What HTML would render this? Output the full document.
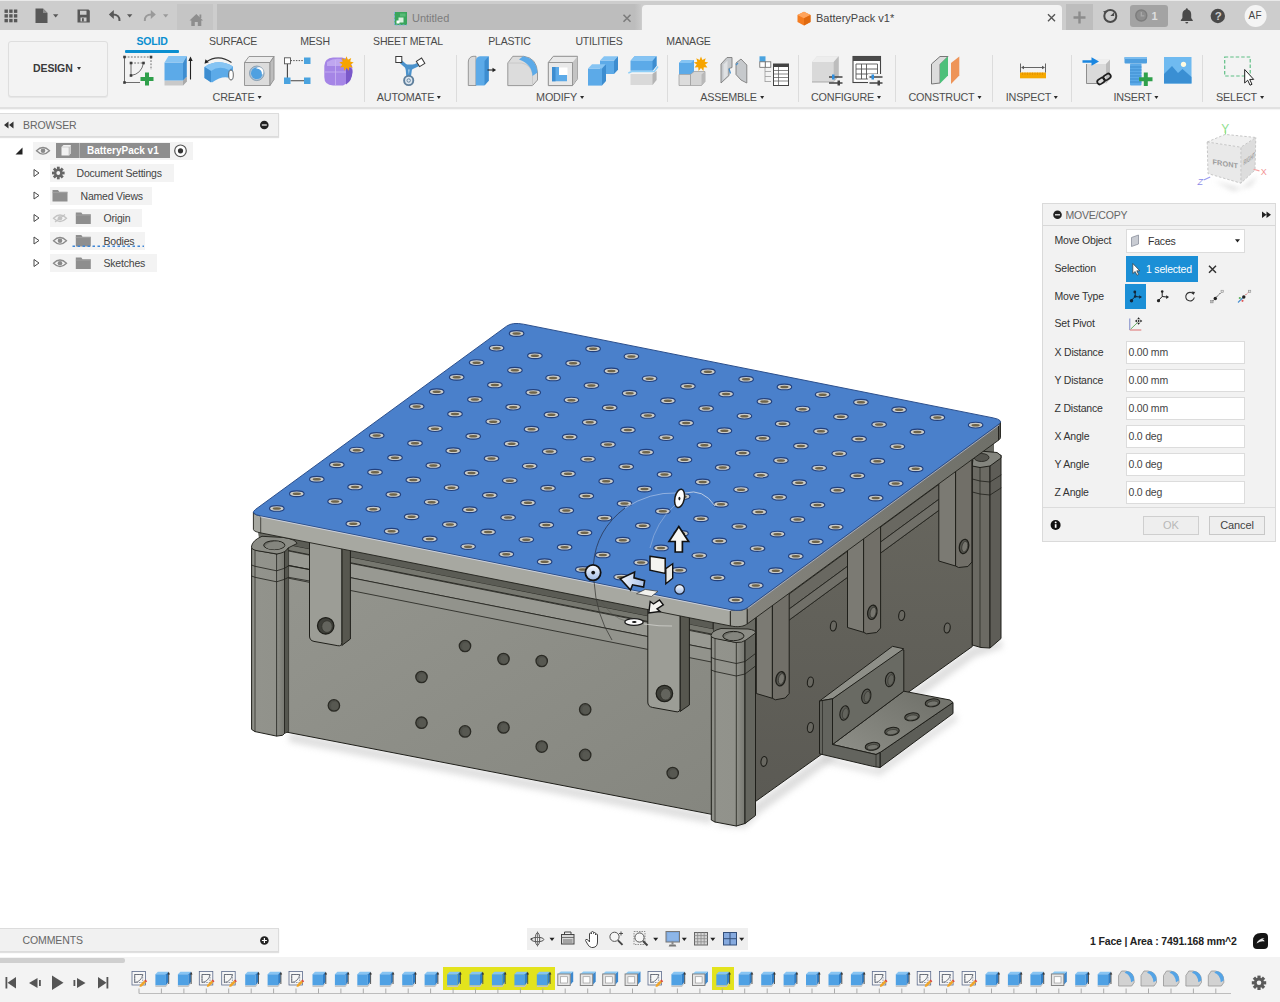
<!DOCTYPE html>
<html>
<head>
<meta charset="utf-8">
<title>BatteryPack v1</title>
<style>
*{box-sizing:border-box;margin:0;padding:0}
html,body{width:1280px;height:1002px;overflow:hidden;background:#fff;font-family:"Liberation Sans",sans-serif;font-size:11px;color:#444}
.abs{position:absolute}
#topbar{position:absolute;left:0;top:0;width:1280px;height:31px;background:#cdcdcd;border-top:1.500px solid #e9e9e9}
#toolbar{position:absolute;left:0;top:30px;width:1280px;height:78.500px;background:#f3f3f3;border-bottom:2.500px solid #e1e1e1;box-shadow:0 1px 1px rgba(0,0,0,.04)}
.tab{position:absolute;top:4px;height:27px}
.t{position:absolute;white-space:nowrap;line-height:1}
.ttab{font-size:10.5px;color:#4a4a4a;top:36px;letter-spacing:-0.2px}
.tgrp{font-size:10.8px;color:#4e4e4e;top:92px;letter-spacing:-0.2px}
.sep{position:absolute;top:55px;width:1px;height:47px;background:#dcdcdc}
.arrow{display:inline-block;width:0;height:0;border-left:2.8px solid transparent;border-right:2.8px solid transparent;border-top:3.8px solid #2a2a2a;vertical-align:middle;margin-left:3px;position:relative;top:-1px}
#browserhdr{position:absolute;left:0;top:113px;width:279px;height:24px;background:#f1f1f1;border:1px solid #dcdcdc;border-left:none;box-shadow:0 1px 1px rgba(0,0,0,.12)}
#commentshdr{position:absolute;left:0;top:928px;width:279px;height:24px;background:#f1f1f1;border:1px solid #dcdcdc;border-left:none;box-shadow:0 1px 1px rgba(0,0,0,.12)}
#timeline{position:absolute;left:0;top:957px;width:1280px;height:45px;background:#f3f3f3}
.row{position:absolute;height:19px;background:#f3f3f3}
.rowt{position:absolute;font-size:10.5px;color:#444;white-space:nowrap;line-height:1;letter-spacing:-0.2px}
#dlg{position:absolute;left:1042px;top:203px;width:234px;height:339px;background:#f2f2f2;border:1px solid #dadada}
.lab{position:absolute;left:11px;font-size:10.5px;color:#333;white-space:nowrap;line-height:1;letter-spacing:-0.2px}
.inp{position:absolute;left:83px;width:119px;height:23px;background:#fff;border:1px solid #dcdcdc;font-size:10.5px;color:#444;line-height:21px;padding-left:2px;letter-spacing:-0.2px}
</style>
</head>
<body>
<!-- ======= TOP BAR ======= -->
<div id="topbar"></div>
<div class="tab" style="left:177px;width:36px;background:#c5c5c5"></div>
<div class="tab" style="left:217px;width:423.500px;background:linear-gradient(90deg,#bdbdbd 0,#bdbdbd 98.500%,#c9c9c9 100%)"></div>
<div class="tab" style="left:641.500px;width:420.500px;top:5px;height:26px;background:#f3f3f3;border-radius:4px 4px 0 0"></div>
<div class="tab" style="left:1066px;width:27px;background:#bdbdbd;height:26px"></div>
<div class="abs" style="left:1130px;top:4.500px;width:38px;height:22px;background:#a3a3a3;border-radius:3px"></div>
<!--TOPICONS-->
<svg class="abs" style="left:0;top:0" width="1280" height="31" viewBox="0 0 1280 31">
<g fill="#585858">
<rect x="4.500" y="9.500" width="3.400" height="3.400"/><rect x="9.200" y="9.500" width="3.400" height="3.400"/><rect x="13.900" y="9.500" width="3.400" height="3.400"/>
<rect x="4.500" y="14.200" width="3.400" height="3.400"/><rect x="9.200" y="14.200" width="3.400" height="3.400"/><rect x="13.900" y="14.200" width="3.400" height="3.400"/>
<rect x="4.500" y="18.900" width="3.400" height="3.400"/><rect x="9.200" y="18.900" width="3.400" height="3.400"/><rect x="13.900" y="18.900" width="3.400" height="3.400"/>
<path d="M35.500 8.500h7.500l4.500 4.500v10h-12z"/>
<path d="M53 14.200h5.400l-2.700 3.300z"/>
<path d="M77.500 9.500h11l1.300 1.300v11.700h-12.300zM80 10.800v4h6.500v-4zM80.500 17.500v4h6v-4z" fill-rule="evenodd"/><rect x="82" y="18.200" width="1.800" height="3.300" fill="#585858"/>
<path d="M127 14.200h5.400l-2.700 3.300z"/>
</g>
<path d="M43 8.500v4.500h4.500z" fill="#8d8d8d"/>
<path d="M119.500 21Q120 14.500 112.500 14.500h-1.500" fill="none" stroke="#585858" stroke-width="2"/><path d="M108.800 14.500l5-4.500v9z" fill="#585858"/>
<path d="M144.800 21Q144.300 14.500 151.800 14.500h1.500" fill="none" stroke="#9a9a9a" stroke-width="2"/><path d="M155.800 14.500l-5-4.500v9z" fill="#9a9a9a"/>
<path d="M163 14.200h5.400l-2.700 3.300z" fill="#9a9a9a"/>
<!-- home -->
<path d="M189.500 20.500l6.800-6.500 6.800 6.500h-1.800v5.500h-3.500v-4h-3v4h-3.500v-5.500z" fill="#8e8e8e"/><rect x="199.500" y="14.500" width="1.800" height="3.500" fill="#8e8e8e"/>
<!-- untitled icon -->
<rect x="394.500" y="12" width="12.500" height="13" fill="#3aa55c"/><path d="M394.500 12v13h12.500" fill="none" stroke="#7fb2e0" stroke-width="1" stroke-dasharray="2 1.500"/><rect x="398.500" y="17.500" width="5" height="5" fill="#d8f0de"/><rect x="396.500" y="20.500" width="3" height="3" fill="#fff"/><rect x="400" y="13.500" width="5.500" height="3" fill="#58bb77"/>
<!-- tab close (inactive) -->
<path d="M623.500 14.800l7 7M630.500 14.800l-7 7" stroke="#7c7c7c" stroke-width="1.600"/>
<!-- active tab icon -->
<path d="M804 11.800l6.500 3.200v7l-6.500 3.500-6.500-3.500v-7z" fill="#f47c20"/><path d="M804 11.800l6.500 3.200-6.500 3.300-6.500-3.300z" fill="#ffa45c"/><path d="M804 18.300l6.500-3.300v7l-6.500 3.500z" fill="#e06a10"/>
<path d="M1048 14.300l7 7M1055 14.300l-7 7" stroke="#555" stroke-width="1.400"/>
<!-- plus -->
<path d="M1079.500 11.500v12M1073.500 17.500h12" stroke="#8c8c8c" stroke-width="2.400"/>
<!-- extension clock -->
<circle cx="1110.300" cy="16" r="6" fill="none" stroke="#4a4a4a" stroke-width="2"/><path d="M1110.300 16l3.800-3.800v3.800zM1105.500 13.500l-2.500-2 3.500-1z" fill="#4a4a4a"/>
<!-- job status -->
<circle cx="1141.300" cy="15.500" r="5.500" fill="#8d8d8d" stroke="#7d7d7d" stroke-width="1.400"/><path d="M1141.300 12v3.800h3" stroke="#a8a8a8" stroke-width="1.300" fill="none"/>
<!-- bell -->
<path d="M1186.800 8.300q1 0 1.100 1.100 3.300 1 3.300 5v3.600l1.600 2.200v.8h-12v-.8l1.600-2.200v-3.600q0-4 3.300-5 .1-1.100 1.100-1.100zM1185.300 22h3q-.2 1.500-1.500 1.500t-1.500-1.500z" fill="#4a4a4a"/>
<!-- help -->
<circle cx="1217.800" cy="16" r="7.200" fill="#4a4a4a"/>
<!-- avatar -->
<circle cx="1255.600" cy="16" r="11" fill="#f4f4f4"/>
</svg>
<div class="t" style="left:412px;top:13px;font-size:11px;color:#7c7c7c">Untitled</div>
<div class="t" style="left:816px;top:13px;font-size:11px;color:#444">BatteryPack v1*</div>
<div class="t" style="left:1151.500px;top:10.500px;font-size:11px;color:#dedede;font-weight:bold">1</div>
<div class="t" style="left:1214.800px;top:10.500px;font-size:11.500px;color:#cdcdcd;font-weight:bold">?</div>
<div class="t" style="left:1248.500px;top:11px;font-size:10px;color:#444;letter-spacing:.3px">AF</div>

<!--/TOPICONS-->
<!-- ======= TOOLBAR ======= -->
<div id="toolbar"></div>
<!--TOOLBAR-->
<div class="abs" style="left:8px;top:41px;width:100px;height:56px;border:1px solid #dedede;border-radius:3px;background:#f3f3f3;box-shadow:0 1px 1px rgba(0,0,0,.06)"></div>
<div class="t" style="left:33px;top:63px;font-size:10.5px;font-weight:bold;color:#3a3a3a;letter-spacing:-0.1px">DESIGN</div>
<div class="abs" style="left:77px;top:67px;width:0;height:0;border-left:2.5px solid transparent;border-right:2.5px solid transparent;border-top:3.5px solid #333"></div>
<div class="t ttab" style="left:152px;transform:translateX(-50%);color:#0a8fd0;font-weight:bold">SOLID</div>
<div class="abs" style="left:125px;top:50px;width:54px;height:2.5px;background:#0a8fd0;border-radius:1px"></div>
<div class="t ttab" style="left:233px;transform:translateX(-50%)">SURFACE</div>
<div class="t ttab" style="left:315px;transform:translateX(-50%)">MESH</div>
<div class="t ttab" style="left:408px;transform:translateX(-50%)">SHEET METAL</div>
<div class="t ttab" style="left:509.5px;transform:translateX(-50%)">PLASTIC</div>
<div class="t ttab" style="left:599px;transform:translateX(-50%)">UTILITIES</div>
<div class="t ttab" style="left:688.5px;transform:translateX(-50%)">MANAGE</div>
<div class="t tgrp" style="left:237px;transform:translateX(-50%)">CREATE<span class="arrow"></span></div>
<div class="t tgrp" style="left:409px;transform:translateX(-50%)">AUTOMATE<span class="arrow"></span></div>
<div class="t tgrp" style="left:560px;transform:translateX(-50%)">MODIFY<span class="arrow"></span></div>
<div class="t tgrp" style="left:732px;transform:translateX(-50%)">ASSEMBLE<span class="arrow"></span></div>
<div class="t tgrp" style="left:846px;transform:translateX(-50%)">CONFIGURE<span class="arrow"></span></div>
<div class="t tgrp" style="left:945px;transform:translateX(-50%)">CONSTRUCT<span class="arrow"></span></div>
<div class="t tgrp" style="left:1032px;transform:translateX(-50%)">INSPECT<span class="arrow"></span></div>
<div class="t tgrp" style="left:1136px;transform:translateX(-50%)">INSERT<span class="arrow"></span></div>
<div class="t tgrp" style="left:1240px;transform:translateX(-50%)">SELECT<span class="arrow"></span></div>
<div class="sep" style="left:364px"></div><div class="sep" style="left:456px"></div><div class="sep" style="left:667px"></div>
<div class="sep" style="left:798px"></div><div class="sep" style="left:895px"></div><div class="sep" style="left:992px"></div>
<div class="sep" style="left:1071px"></div><div class="sep" style="left:1202px"></div>
<svg class="abs" style="left:0;top:0" width="1280" height="106" viewBox="0 0 1280 106">
<!-- sketch -->
<g stroke="#555" stroke-width=".85" fill="none">
<path d="M124.500 57H151" stroke-dasharray="1.800 1.400"/><path d="M151 57V70" stroke-dasharray="1.800 1.400"/><path d="M124.500 57V82.500H140"/>
<path d="M131 63H143.500" stroke-dasharray="1.800 1.400"/><path d="M131 63V75.500Q141.500 74 143.500 63"/>
</g>
<g fill="#3a3a3a"><rect x="123.200" y="55.700" width="2.600" height="2.600"/><rect x="149.700" y="55.700" width="2.600" height="2.600"/><rect x="123.200" y="81.200" width="2.600" height="2.600"/><rect x="129.700" y="61.700" width="2.600" height="2.600"/><rect x="142.200" y="61.700" width="2.600" height="2.600"/><rect x="129.700" y="74.200" width="2.600" height="2.600"/></g>
<path d="M145 72.500h4v4.500h4.500v4h-4.500v4.500h-4v-4.500h-4.500v-4h4.500z" fill="#2fa04b"/>
<!-- extrude -->
<path d="M164.500 80.500h18.500l3.800-4v5l-3.800 4h-18.500z" fill="#c9c9c9"/><path d="M183 80.500l3.800-4v5l-3.800 4z" fill="#aaa"/>
<path d="M164.500 62.500h18.500v18h-18.500z" fill="#5caae8"/><path d="M164.500 62.500l4-6.500h18.300l-3.800 6.500z" fill="#86c4f3"/><path d="M183 62.500l3.800-6.500v20.500l-3.800 4z" fill="#3d8dd0"/>
<path d="M190.500 79.500V59" stroke="#222" stroke-width="1.100"/><path d="M188.300 61l2.200-4.500 2.200 4.500z" fill="#222"/>
<!-- revolve -->
<path d="M204.500 67Q218 58 233 66.500V79.500Q224 74 212 82.500L204.500 78z" fill="#5caae8"/>
<path d="M204.500 67Q218 58 233 66.500L229 70Q219 65 211 71z" fill="#86c4f3"/>
<path d="M211 71v11.500l-6.500-4.500V67z" fill="#3d8dd0"/>
<ellipse cx="231" cy="75" rx="2.300" ry="5" fill="#fff" stroke="#444" stroke-width=".8"/>
<path d="M206 62Q218.500 53.500 231.500 62.500" stroke="#333" stroke-width="1.100" fill="none"/><path d="M204.500 63.800l1-4.500 3.300 3z" fill="#222"/>
<!-- hole -->
<path d="M244.500 62.500h25.500v23h-25.500z" fill="#dcdcdc" stroke="#8e8e8e" stroke-width=".9"/><path d="M244.500 62.500l4.500-6h25l-4 6z" fill="#ececec" stroke="#8e8e8e" stroke-width=".9"/><path d="M270 62.500l4-6v23l-4 6z" fill="#bdbdbd" stroke="#8e8e8e" stroke-width=".9"/>
<circle cx="256.800" cy="73.300" r="7.300" fill="#a9c2d8" stroke="#7d95aa" stroke-width=".8"/><circle cx="256.800" cy="73.300" r="5.800" fill="#4fa0e0"/><path d="M256 68.500a5.500 5.500 0 0 1 6 6.500a4 4 0 0 0-6-6.500z" fill="#fff"/>
<!-- pattern -->
<path d="M290.500 60.600H304" stroke="#555" stroke-dasharray="1.500 1.200" stroke-width="1"/><path d="M287.400 63.500V78M290.500 80.800H304.500" stroke="#444" stroke-width="1.100"/>
<rect x="284.500" y="57.800" width="6" height="6" fill="#fff" stroke="#555" stroke-width=".9"/><rect x="304" y="57.500" width="6.500" height="6.500" fill="#4aa3df"/><rect x="284" y="77.500" width="6.500" height="6.500" fill="#4aa3df"/><rect x="304" y="77.500" width="6.500" height="6.500" fill="#4aa3df"/>
<!-- form -->
<path d="M324.300 66Q324.500 58 333 57.500H342Q352.500 59 352.500 70Q352.500 82 343 85.500H333Q324.300 85 324.300 77z" fill="#a585e6"/>
<path d="M346 68Q352.500 66 352.500 72Q352 81 346 84.500z" fill="#7a58c9"/><path d="M327 62Q334 57.500 341 59L346 66H327z" fill="#bfa6f0"/>
<path d="M335.500 60V85M325 72H346" stroke="#c9b5f3" stroke-width=".8" fill="none"/>
<path d="M346.500 56.300l1.400 3.400 3.300-1.700-1 3.500 3.500.9-3 2 2.200 3-3.600-.4-.4 3.700-2.400-2.800-2.400 2.800-.4-3.700-3.600.4 2.200-3-3-2 3.500-.9-1-3.500 3.300 1.700z" fill="#f6a400"/>
<!-- automate -->
<path d="M399.500 60.500L408 68M419.500 63.800L410.500 68" stroke="#4a92cc" stroke-width="3.600" fill="none" stroke-linecap="round"/>
<path d="M404.500 64.500h9.500l-2.200 6 -1 7.500h-4.400l-.6-7.500z" fill="#4a92cc"/><path d="M408.300 69.500h1.200l-.6 5z" fill="#dbe9f5"/>
<circle cx="408.700" cy="80.500" r="4.600" fill="#dde6ee" stroke="#5f7f9c" stroke-width="1.900"/><circle cx="408.700" cy="80.500" r="1.700" fill="none" stroke="#5f7f9c" stroke-width=".9"/>
<rect x="395.800" y="56.500" width="6" height="6" fill="#fff" stroke="#3a3a3a" stroke-width="1"/><rect x="417.500" y="59.200" width="6.200" height="6.200" fill="#fff" stroke="#3a3a3a" stroke-width="1" transform="rotate(-32 420.600 62.300)"/>
<!-- presspull -->
<path d="M468.300 62Q468.500 57 473 56.300h3V85.500h-7.700z" fill="#dcdcdc" stroke="#8e8e8e" stroke-width=".9"/>
<path d="M475.800 61Q476 57 480 56.300h8.700v24.500l-4.500 4.800h-8.400z" fill="#5caae8"/><path d="M484.500 61l4.200-4.700v24.500l-4.200 4.800z" fill="#3d8dd0"/>
<path d="M487.500 70h6" stroke="#222" stroke-width="1.100"/><path d="M492.500 67.800l3.600 2.200-3.600 2.200z" fill="#222"/>
<!-- fillet -->
<path d="M507.800 63l5-6.700h11Q537 58 537.500 73v7l-5 5.600h-24.700z" fill="#dcdcdc" stroke="#8e8e8e" stroke-width=".9"/>
<path d="M507.800 63h14Q531 65 532.500 74v11.600" fill="none" stroke="#c4c4c4" stroke-width=".8"/>
<path d="M519 59.500l4-3.200Q536 58 537.500 72.500l-5 3.500Q532 64 519 59.500z" fill="#5caae8"/>
<!-- shell -->
<path d="M548.300 62.500l5-6.200h24.200v22.500l-5 6.800h-24.200z" fill="#e9e9e9" stroke="#8e8e8e" stroke-width="1"/><path d="M572.500 62.500l5-6.200v22.500l-5 6.800z" fill="#c4c4c4"/><path d="M548.300 62.500h24.200v23.100" fill="none" stroke="#8e8e8e" stroke-width=".9"/>
<path d="M552 67h7v8h8v6.300h-15z" fill="#5caae8"/><path d="M552 67h3.500v14.300H552z" fill="#3d8dd0"/><path d="M559 67.500h8.500v7.500H559z" fill="#fff"/>
<!-- combine -->
<path d="M600 60.500h14v13.500h-14z" fill="#5caae8"/><path d="M600 60.500l4-4.200h14l-4 4.200z" fill="#86c4f3"/><path d="M614 60.500l4-4.200v13.500l-4 4.200z" fill="#3d8dd0"/>
<path d="M588 68.500h14v17.100h-14z" fill="#5caae8"/><path d="M588 68.500l4-4.200h14l-4 4.200z" fill="#86c4f3"/><path d="M602 68.500l4-4.200v16.700l-4 4.600z" fill="#3d8dd0"/>
<!-- split -->
<path d="M630.500 61l4-4.700h22v9.500l-4 5h-22z" fill="#5caae8"/><path d="M630.500 61l4-4.700h22l-4 4.700z" fill="#86c4f3"/><path d="M652.500 61l4-4.700v9.500l-4 5z" fill="#3d8dd0"/>
<path d="M630.500 74h22l4-3v9l-4 5h-22z" fill="#d9d9d9"/><path d="M652.500 74l4-3v9l-4 5z" fill="#b5b5b5"/>
<path d="M628.300 73l3.500-1.500h22.500l3.700-5" stroke="#8fd0f8" stroke-width="1.400" fill="none"/>
<!-- new component -->
<path d="M679 63l3-3h12v14.500h-15z" fill="#5caae8"/><path d="M679 63l3-3h12l-3 3z" fill="#86c4f3"/>
<path d="M679 74.500h11.500v11H679z" fill="#dcdcdc" stroke="#999" stroke-width=".7"/><path d="M690.500 74.500l3.500-3h11v10l-3.500 4H690.500z" fill="#d4d4d4" stroke="#999" stroke-width=".7"/><path d="M701.500 74.500l3.500-3v10l-3.500 4z" fill="#b9b9b9"/>
<path d="M701 56.500l1.400 3.400 3.300-1.700-1 3.500 3.500.9-3 2 2.200 3-3.600-.4-.4 3.700-2.400-2.800-2.400 2.800-.4-3.700-3.600.4 2.200-3-3-2 3.500-.9-1-3.500 3.300 1.700z" fill="#f6a400"/>
<!-- joint -->
<path d="M721 64l6-6.500h5v10l-3 1v7l-8 7.500z" fill="#c6c9cc" stroke="#7e7e7e" stroke-width=".9"/><path d="M723.500 64.500l4-4v15l-4 4z" fill="#dfe1e3"/>
<path d="M736 63l5-4 5.800 6v18l-5.800-3-5-5.500z" fill="#c6c9cc" stroke="#7e7e7e" stroke-width=".9"/><path d="M729 68.500l1.500 5M736 65l2-2" stroke="#4a92cc" stroke-width="1.200"/>
<!-- bom table -->
<rect x="759.500" y="56.300" width="6" height="5.500" fill="#4aa3df"/><rect x="759.800" y="61.800" width="5.500" height="5.500" fill="#fff" stroke="#666" stroke-width=".8"/><rect x="765.300" y="61.800" width="5.500" height="5.500" fill="#fff" stroke="#666" stroke-width=".8"/>
<path d="M765 67.500V82M765 71.500h6M765 76.500h6M765 81.500h6" stroke="#9a9a9a" stroke-width=".8" fill="none"/>
<rect x="773.500" y="64" width="15" height="21.500" fill="#fff" stroke="#444" stroke-width="1"/><rect x="773.500" y="64" width="15" height="3" fill="#444"/>
<path d="M773.500 70.500h15M773.500 74h15M773.500 77.500h15M773.500 81h15M778.500 67v18.500" stroke="#555" stroke-width=".7"/>
<!-- configure 1 -->
<path d="M812 62l5-5.700h21.700v20l-5 5.700H812z" fill="#d9d9d9"/><path d="M812 62l5-5.700h21.700l-5 5.700z" fill="#ededed"/><path d="M833.700 62l5-5.700v20l-5 5.700z" fill="#bdbdbd"/><path d="M812 82h21.700" stroke="#9a9a9a" stroke-width=".8"/>
<path d="M829 77h13.500M829 83h13.500" stroke="#444" stroke-width="1.300"/><rect x="832" y="74.500" width="2.500" height="5" fill="#2f8fe0"/><rect x="837.500" y="80.500" width="2.500" height="5" fill="#444"/>
<!-- configure 2 -->
<rect x="853" y="56.500" width="27.500" height="26" fill="#fff" stroke="#444" stroke-width="1.100"/><rect x="853" y="56.500" width="27.500" height="4.500" fill="#4a4a4a"/>
<path d="M856 64h21.500v15H856zM856 69h21.500M856 74h21.500M861.500 64v15M866.500 64v15" stroke="#555" stroke-width=".9" fill="none"/>
<rect x="868" y="74" width="15" height="12" fill="#f3f3f3"/><path d="M869.500 77h13M869.500 83h13" stroke="#444" stroke-width="1.300"/><rect x="871.500" y="74.500" width="2.500" height="5" fill="#2f8fe0"/><rect x="877.500" y="80.500" width="2.500" height="5" fill="#444"/>
<!-- construct -->
<path d="M931.500 64l8.500-7.500h8l-8 8v18.500l-8.500 1z" fill="#dcdcdc" stroke="#777" stroke-width="1"/><path d="M940 64l8-7.500v19l-8 8z" fill="#4dc07a"/><path d="M951 63l8.300-6.500v19l-8.300 8.500z" fill="#ee9458"/>
<!-- inspect -->
<rect x="1020" y="72.500" width="26" height="5.800" fill="#f5a800"/><path d="M1022.500 72.500v2.500M1025 72.500v2.500M1027.500 72.500v2.500M1030 72.500v2.500M1032.500 72.500v2.500M1035 72.500v2.500M1037.500 72.500v2.500M1040 72.500v2.500M1042.500 72.500v2.500" stroke="#e08a00" stroke-width=".7"/>
<path d="M1020.500 63.500v9M1045.500 63.500v9M1022 67.500h22" stroke="#555" stroke-width=".9" fill="none"/><path d="M1021 67.500l3-1.800v3.600zM1045 67.500l-3-1.800v3.600z" fill="#555"/>
<!-- insert 1 -->
<path d="M1086.500 64l4-4.300h19.500v19l-4 4.800h-19.500z" fill="#dadada"/><path d="M1086.500 64l4-4.300h19.500l-4 4.300z" fill="#efefef"/><path d="M1106 64l4-4.300v19l-4 4.800z" fill="#bdbdbd"/><path d="M1086.500 64v19.500h13" stroke="#777" stroke-width=".8" fill="none"/>
<path d="M1082.500 60.200h9v-3l7.500 4.300-7.500 4.300v-3h-9z" fill="#1a86e0"/>
<g fill="none" stroke="#1e1e1e" stroke-width="1.700"><rect x="1097" y="78.500" width="8" height="5" rx="2.500" transform="rotate(-35 1101 81)"/><rect x="1103" y="74.500" width="8" height="5" rx="2.500" transform="rotate(-35 1107 77)"/></g>
<!-- bolt -->
<rect x="1124.500" y="57" width="22.500" height="6.500" rx="1" fill="#4f9fdf"/><rect x="1124.500" y="57" width="22.500" height="2" fill="#7bbcee"/>
<rect x="1130" y="63.500" width="11.500" height="22" rx="1" fill="#5caae8"/><path d="M1130 67h11.500M1130 70h11.500M1130 73h11.500M1130 76h11.500M1130 79h11.500M1130 82h11.500" stroke="#3d8dd0" stroke-width="1"/>
<path d="M1143.800 72.500h4v4.800h4.700v4h-4.700v4.700h-4v-4.700h-4.700v-4h4.700z" fill="#2fa04b"/>
<!-- image -->
<rect x="1164" y="57" width="27.500" height="26.500" fill="#6fbaf0"/><path d="M1164 74l8-8 6 7 4.500-4 9 8v6.500h-27.500z" fill="#3a8fd3"/><circle cx="1183.500" cy="64.300" r="2.600" fill="#fffbe0"/>
<!-- select -->
<rect x="1224.700" y="57" width="25.500" height="19" fill="none" stroke="#5fbf85" stroke-width="1.200" stroke-dasharray="3.500 2"/>
<path d="M1244.700 69.500v13.500l3-2.800 2.300 5 2-.9-2.300-4.900h4z" fill="#fff" stroke="#222" stroke-width="1" stroke-linejoin="round"/>
</svg>

<!--/TOOLBAR-->
<!-- ======= CANVAS ======= -->
<!--MODEL-->
<svg class="abs" style="left:0;top:106px" width="1280" height="820" viewBox="0 106 1280 820">
<defs>
<linearGradient id="gF" x1="0" y1="0" x2="1" y2="1"><stop offset="0" stop-color="#95968f"/><stop offset="1" stop-color="#85867f"/></linearGradient>
<linearGradient id="gR" x1="0" y1="0" x2="0" y2="1"><stop offset="0" stop-color="#68675f"/><stop offset="1" stop-color="#5b5a54"/></linearGradient><linearGradient id="gBH" gradientUnits="userSpaceOnUse" x1="905" y1="690" x2="860" y2="760"><stop offset="0" stop-color="#74756e"/><stop offset="1" stop-color="#8c8d86"/></linearGradient><linearGradient id="gPR" gradientUnits="userSpaceOnUse" x1="745" y1="615" x2="1000" y2="430"><stop offset="0" stop-color="#85847d"/><stop offset="1" stop-color="#6e6f68"/></linearGradient>
<linearGradient id="gC" x1="0" y1="0" x2="1" y2="0"><stop offset="0" stop-color="#8a8b84"/><stop offset=".1" stop-color="#92938c"/><stop offset=".74" stop-color="#91928b"/><stop offset=".8" stop-color="#8a8b84"/><stop offset="1" stop-color="#787972"/></linearGradient>
<filter id="bl2" x="-10%" y="-30%" width="120%" height="160%"><feGaussianBlur stdDeviation="3"/></filter><filter id="bl" x="-20%" y="-20%" width="140%" height="140%"><feGaussianBlur stdDeviation="7"/></filter>
</defs>
<path d="M757 802L972 647L1002 640L1002 648L975 657L760 813L745 828L715 826z" fill="#c2c2c2" filter="url(#bl2)" opacity=".55"/>
<path d="M822 755L875 768L955 713L958 720L880 776L822 762z" fill="#c6c6c6" filter="url(#bl2)" opacity=".5"/>
<path d="M257.0 527.0L740.0 622.0L994.0 436.0L994.0 452.0L756.0 640.0L712.0 636.0L290.0 552.0L259.0 538.0z" fill="#696a63" stroke="none" stroke-width="0" stroke-linejoin="round" />
<path d="M289 732L712 814L712 824L289 742z" fill="#c4c4c4" filter="url(#bl2)" opacity=".55"/>
<path d="M755.5 614.7L972.3 455.8L972.3 646.5L755.5 801.5z" fill="url(#gR)" stroke="#1f1f1a" stroke-width="1.0" stroke-linejoin="round" />
<path d="M755.5 633.7L972.3 474.8" fill="none" stroke="#1f1f1a" stroke-width="0.9" stroke-linecap="round" />
<path d="M755.5 644.7L972.3 485.8" fill="none" stroke="#1f1f1a" stroke-width="0.9" stroke-linecap="round" />
<path d="M755.5 618.7L972.3 459.8L972.3 474.8L755.5 633.7z" fill="#696861" stroke="#1f1f1a" stroke-width="0.8" stroke-linejoin="round" />
<path d="M755.5 633.7L972.3 474.8L972.3 485.8L755.5 644.7z" fill="#706f68" stroke="#1f1f1a" stroke-width="0.8" stroke-linejoin="round" />
<ellipse cx="833.4" cy="626" rx="3" ry="5" fill="#696861" stroke="#1f1f1a" stroke-width="1.100" transform="rotate(8 833.4 626)"/>
<ellipse cx="901.7" cy="615.5" rx="3" ry="5" fill="#696861" stroke="#1f1f1a" stroke-width="1.100" transform="rotate(8 901.7 615.5)"/>
<ellipse cx="947.2" cy="628" rx="3" ry="5" fill="#696861" stroke="#1f1f1a" stroke-width="1.100" transform="rotate(8 947.2 628)"/>
<ellipse cx="810.4" cy="682" rx="3" ry="5" fill="#696861" stroke="#1f1f1a" stroke-width="1.100" transform="rotate(8 810.4 682)"/>
<ellipse cx="810.4" cy="727.5" rx="3" ry="5" fill="#696861" stroke="#1f1f1a" stroke-width="1.100" transform="rotate(8 810.4 727.5)"/>
<ellipse cx="764" cy="761.4" rx="3" ry="5" fill="#696861" stroke="#1f1f1a" stroke-width="1.100" transform="rotate(8 764 761.4)"/>
<path d="M972.3 466.0L990.0 462.0L990.0 648.0L981.0 647.5L972.3 645.0z" fill="#6b6a63" stroke="#1f1f1a" stroke-width="1.0" stroke-linejoin="round" />
<path d="M990.0 462.0L1001.0 455.0L1001.0 638.5L990.0 648.0z" fill="#5e5d57" stroke="#1f1f1a" stroke-width="1.0" stroke-linejoin="round" />
<path d="M972.3 466.0L973.0 458.0L980.0 451.0L997.0 452.5L1001.0 455.5L1001.0 458.0L990.0 466.0L980.0 467.5z" fill="#84857e" stroke="#1f1f1a" stroke-width="1.0" stroke-linejoin="round" />
<ellipse cx="981.5" cy="457.5" rx="7.500" ry="4" fill="#55554f" stroke="#1f1f1a" stroke-width=".8"/>
<path d="M972.3 479.0L980.0 481.0L990.0 482.0L1001.0 475.0" fill="none" stroke="#1f1f1a" stroke-width="0.8" stroke-linecap="round" />
<path d="M972.3 492.0L980.0 494.0L990.0 495.0L1001.0 488.0" fill="none" stroke="#1f1f1a" stroke-width="0.8" stroke-linecap="round" />
<path d="M980.0 467.5L980.0 647.0" fill="none" stroke="#1f1f1a" stroke-width="0.7" stroke-linecap="round" />
<path d="M938.8 481.3L955.6 469.0L955.6 566.0L938.8 561.0z" fill="#7b7a73" stroke="#1f1f1a" stroke-width="1.0" stroke-linejoin="round" />
<path d="M955.6 469.0L971.9 457.1L971.9 562.0L967.9 566.5L958.6 567.5L955.6 566.0z" fill="#716f68" stroke="#1f1f1a" stroke-width="1.0" stroke-linejoin="round" />
<ellipse cx="964" cy="546.5" rx="4.600" ry="7.200" fill="#55554f" stroke="#1f1f1a" stroke-width="1.300" transform="rotate(12 964 546.5)"/>
<ellipse cx="964.8" cy="546.5" rx="2.900" ry="5.400" fill="#77766f" stroke="#33332d" stroke-width=".7" transform="rotate(12 964 546.5)"/>
<path d="M847.5 548.2L863.6 536.5L863.6 632.3L847.5 627.5z" fill="#7b7a73" stroke="#1f1f1a" stroke-width="1.0" stroke-linejoin="round" />
<path d="M863.6 536.5L880.6 524.1L880.6 628.0L876.6 632.5L866.6 633.8L863.6 632.3z" fill="#716f68" stroke="#1f1f1a" stroke-width="1.0" stroke-linejoin="round" />
<ellipse cx="872.3" cy="612.3" rx="4.600" ry="7.200" fill="#55554f" stroke="#1f1f1a" stroke-width="1.300" transform="rotate(12 872.3 612.3)"/>
<ellipse cx="873.0999999999999" cy="612.3" rx="2.900" ry="5.400" fill="#77766f" stroke="#33332d" stroke-width=".7" transform="rotate(12 872.3 612.3)"/>
<path d="M756.3 615.1L772.4 603.3L772.4 698.3L756.3 693.5z" fill="#7b7a73" stroke="#1f1f1a" stroke-width="1.0" stroke-linejoin="round" />
<path d="M772.4 603.3L789.2 591.1L789.2 693.5L785.2 698.0L775.4 699.8L772.4 698.3z" fill="#716f68" stroke="#1f1f1a" stroke-width="1.0" stroke-linejoin="round" />
<ellipse cx="780.6" cy="678.8" rx="4.600" ry="7.200" fill="#55554f" stroke="#1f1f1a" stroke-width="1.300" transform="rotate(12 780.6 678.8)"/>
<ellipse cx="781.4" cy="678.8" rx="2.900" ry="5.400" fill="#77766f" stroke="#33332d" stroke-width=".7" transform="rotate(12 780.6 678.8)"/>
<path d="M880.0 752.5L953.0 702.5L953.0 713.5L880.0 767.5z" fill="#5d5e58" stroke="#1f1f1a" stroke-width="1.0" stroke-linejoin="round" />
<path d="M832.5 744.5L903.8 691.2L950.0 700.0L953.0 702.5L880.0 752.5L876.0 754.5z" fill="url(#gBH)" stroke="#1f1f1a" stroke-width="1.0" stroke-linejoin="round" />
<path d="M832.5 698.8L900.0 649.2L903.8 650.0L903.8 691.2L832.5 744.5z" fill="#696a63" stroke="#1f1f1a" stroke-width="1.0" stroke-linejoin="round" />
<path d="M819.5 701.0L892.5 646.3L903.8 648.8L832.5 698.8z" fill="#8e8f88" stroke="#1f1f1a" stroke-width="1.0" stroke-linejoin="round" />
<path d="M819.5 701.0L832.5 698.8L832.5 744.5L876.0 754.5L880.0 752.5L880.0 767.5L872.5 766.3L819.5 753.8z" fill="#63645e" stroke="#1f1f1a" stroke-width="1.0" stroke-linejoin="round" />
<path d="M832.5 698.8L832.5 744.5" fill="none" stroke="#1f1f1a" stroke-width="0.8" stroke-linecap="round" />
<path d="M822.5 700.5L822.5 754.0" fill="none" stroke="#1f1f1a" stroke-width="0.6" stroke-linecap="round" />
<path d="M876.0 754.5L876.0 767.0" fill="none" stroke="#1f1f1a" stroke-width="0.6" stroke-linecap="round" />
<ellipse cx="844.5" cy="713" rx="4.500" ry="7.300" fill="#5b5c56" stroke="#1f1f1a" stroke-width="1.100" transform="rotate(12 844.5 713)"/>
<ellipse cx="845.4" cy="713.3" rx="2.900" ry="5.500" fill="#62635c" stroke="#33332d" stroke-width=".6" transform="rotate(12 844.5 713)"/>
<ellipse cx="866.3" cy="696.3" rx="4.500" ry="7.300" fill="#5b5c56" stroke="#1f1f1a" stroke-width="1.100" transform="rotate(12 866.3 696.3)"/>
<ellipse cx="867.1999999999999" cy="696.5999999999999" rx="2.900" ry="5.500" fill="#62635c" stroke="#33332d" stroke-width=".6" transform="rotate(12 866.3 696.3)"/>
<ellipse cx="890" cy="679.5" rx="4.500" ry="7.300" fill="#5b5c56" stroke="#1f1f1a" stroke-width="1.100" transform="rotate(12 890 679.5)"/>
<ellipse cx="890.9" cy="679.8" rx="2.900" ry="5.500" fill="#62635c" stroke="#33332d" stroke-width=".6" transform="rotate(12 890 679.5)"/>
<ellipse cx="872.5" cy="746.3" rx="7.300" ry="3.900" fill="#585952" stroke="#1f1f1a" stroke-width="1.100" transform="rotate(-8 872.5 746.3)"/>
<ellipse cx="872.5" cy="747.0999999999999" rx="5.600" ry="2.500" fill="#74756e" stroke="#33332d" stroke-width=".6" transform="rotate(-8 872.5 746.3)"/>
<ellipse cx="892" cy="731.3" rx="7.300" ry="3.900" fill="#585952" stroke="#1f1f1a" stroke-width="1.100" transform="rotate(-8 892 731.3)"/>
<ellipse cx="892" cy="732.0999999999999" rx="5.600" ry="2.500" fill="#74756e" stroke="#33332d" stroke-width=".6" transform="rotate(-8 892 731.3)"/>
<ellipse cx="912" cy="716.8" rx="7.300" ry="3.900" fill="#585952" stroke="#1f1f1a" stroke-width="1.100" transform="rotate(-8 912 716.8)"/>
<ellipse cx="912" cy="717.5999999999999" rx="5.600" ry="2.500" fill="#74756e" stroke="#33332d" stroke-width=".6" transform="rotate(-8 912 716.8)"/>
<ellipse cx="932.5" cy="702.8" rx="7.300" ry="3.900" fill="#585952" stroke="#1f1f1a" stroke-width="1.100" transform="rotate(-8 932.5 702.8)"/>
<ellipse cx="932.5" cy="703.5999999999999" rx="5.600" ry="2.500" fill="#74756e" stroke="#33332d" stroke-width=".6" transform="rotate(-8 932.5 702.8)"/>
<path d="M286.0 535.2L713.0 617.8L713.0 814.6L286.0 732.0z" fill="url(#gF)" stroke="#1f1f1a" stroke-width="1.0" stroke-linejoin="round" />
<path d="M286.0 536.2L713.0 620.8L713.0 629.3L286.0 544.7z" fill="#5b5c55" stroke="#1f1f1a" stroke-width="0.8" stroke-linejoin="round" />
<path d="M286.0 544.7L713.0 629.3L713.0 634.3L286.0 550.0z" fill="#76776f" stroke="none" stroke-width="0" stroke-linejoin="round" />
<path d="M286.0 550.0L713.0 634.3" fill="none" stroke="#1f1f1a" stroke-width="0.8" stroke-linecap="round" />
<path d="M286.0 550.5L713.0 635.1L713.0 649.5L286.0 564.9z" fill="#989992" stroke="#1f1f1a" stroke-width="0.8" stroke-linejoin="round" />
<path d="M286.0 564.9L713.0 649.5L713.0 662.3L286.0 577.7z" fill="#92938c" stroke="#1f1f1a" stroke-width="0.8" stroke-linejoin="round" />
<circle cx="333.9" cy="705.4" r="5.700" fill="#4f504a" stroke="#2b2b25" stroke-width="1.300"/>
<ellipse cx="334.7" cy="705.9" rx="3.700" ry="4.100" fill="#575851"/>
<circle cx="421.5" cy="677" r="5.700" fill="#4f504a" stroke="#2b2b25" stroke-width="1.300"/>
<ellipse cx="422.3" cy="677.5" rx="3.700" ry="4.100" fill="#575851"/>
<circle cx="421.5" cy="722.7" r="5.700" fill="#4f504a" stroke="#2b2b25" stroke-width="1.300"/>
<ellipse cx="422.3" cy="723.2" rx="3.700" ry="4.100" fill="#575851"/>
<circle cx="465" cy="646" r="5.700" fill="#4f504a" stroke="#2b2b25" stroke-width="1.300"/>
<ellipse cx="465.8" cy="646.5" rx="3.700" ry="4.100" fill="#575851"/>
<circle cx="465" cy="731.4" r="5.700" fill="#4f504a" stroke="#2b2b25" stroke-width="1.300"/>
<ellipse cx="465.8" cy="731.9" rx="3.700" ry="4.100" fill="#575851"/>
<circle cx="503.5" cy="659" r="5.700" fill="#4f504a" stroke="#2b2b25" stroke-width="1.300"/>
<ellipse cx="504.3" cy="659.5" rx="3.700" ry="4.100" fill="#575851"/>
<circle cx="503.5" cy="727.5" r="5.700" fill="#4f504a" stroke="#2b2b25" stroke-width="1.300"/>
<ellipse cx="504.3" cy="728.0" rx="3.700" ry="4.100" fill="#575851"/>
<circle cx="541.7" cy="661" r="5.700" fill="#4f504a" stroke="#2b2b25" stroke-width="1.300"/>
<ellipse cx="542.5" cy="661.5" rx="3.700" ry="4.100" fill="#575851"/>
<circle cx="541.7" cy="746.6" r="5.700" fill="#4f504a" stroke="#2b2b25" stroke-width="1.300"/>
<ellipse cx="542.5" cy="747.1" rx="3.700" ry="4.100" fill="#575851"/>
<circle cx="585.2" cy="709.4" r="5.700" fill="#4f504a" stroke="#2b2b25" stroke-width="1.300"/>
<ellipse cx="586.0" cy="709.9" rx="3.700" ry="4.100" fill="#575851"/>
<circle cx="585.2" cy="754.9" r="5.700" fill="#4f504a" stroke="#2b2b25" stroke-width="1.300"/>
<ellipse cx="586.0" cy="755.4" rx="3.700" ry="4.100" fill="#575851"/>
<circle cx="672.7" cy="773" r="5.700" fill="#4f504a" stroke="#2b2b25" stroke-width="1.300"/>
<ellipse cx="673.5" cy="773.5" rx="3.700" ry="4.100" fill="#575851"/>
<path d="M341.8 546.4L350.4 541.4L350.4 639.0L341.8 645.5z" fill="#57574f" stroke="#1f1f1a" stroke-width="1.0" stroke-linejoin="round" />
<path d="M309.5 540L341.8 546.4L341.8 642.5Q341.8 646.5 337.8 645.7L314.0 641.4Q309.5 640.5 309.5 636.0z" fill="#9c9d96" stroke="#1f1f1a" stroke-width="1" stroke-linejoin="round"/>
<circle cx="325.7" cy="625.8" r="8.200" fill="#3f403a" stroke="#1f1f1a" stroke-width="1.300"/>
<ellipse cx="327.0" cy="626.5999999999999" rx="5.200" ry="5.800" fill="#63645d" stroke="#2d2d27" stroke-width=".6"/>
<path d="M680.0 613.4L689.4 608.4L689.4 705.0L680.0 711.5z" fill="#57574f" stroke="#1f1f1a" stroke-width="1.0" stroke-linejoin="round" />
<path d="M647.8 607L680 613.4L680 708.5Q680 712.5 676.0 711.7L652.3 707.4Q647.8 706.5 647.8 702.0z" fill="#9c9d96" stroke="#1f1f1a" stroke-width="1" stroke-linejoin="round"/>
<circle cx="664.4" cy="693.5" r="8.200" fill="#3f403a" stroke="#1f1f1a" stroke-width="1.300"/>
<ellipse cx="665.6999999999999" cy="694.3" rx="5.200" ry="5.800" fill="#63645d" stroke="#2d2d27" stroke-width=".6"/>
<path d="M251.6 548.0L255.0 550.0L276.6 554.0L284.5 551.0L284.5 733.5L282.5 735.3L276.6 736.1L255.0 731.6L251.6 729.4z" fill="url(#gC)" stroke="#1f1f1a" stroke-width="1.0" stroke-linejoin="round" />
<path d="M284.5 551.0L288.6 548.0L288.6 731.5L284.5 733.5z" fill="#55564f" stroke="#1f1f1a" stroke-width="0.6" stroke-linejoin="round" />
<path d="M255.0 551.0L255.0 731.6" fill="none" stroke="#1f1f1a" stroke-width="0.7" stroke-linecap="round" />
<path d="M276.6 554.0L276.6 736.0" fill="none" stroke="#1f1f1a" stroke-width="0.8" stroke-linecap="round" />
<path d="M251.6 565.0L255.0 566.3L276.6 570.8L284.5 568.3L288.6 565.8L309.5 569.5" fill="none" stroke="#1f1f1a" stroke-width="0.8" stroke-linecap="round" />
<path d="M251.6 576.0L255.0 577.3L276.6 581.8L284.5 579.3L288.6 577.3L309.5 581.0" fill="none" stroke="#1f1f1a" stroke-width="0.8" stroke-linecap="round" />
<path d="M251.4 547Q252 540.500 262 536.300L284 537.500Q296 539.500 297 543.500L288 548Q286 552.500 277 554L256 550.500Q251.400 549.500 251.400 547z" fill="#8b8c85" stroke="#1f1f1a" stroke-width=".9"/>
<ellipse cx="274.3" cy="545.2" rx="10.600" ry="4.400" fill="#6f7069" stroke="#1f1f1a" stroke-width="1"/>
<path d="M265 546.500Q268 541.500 278 541.500Q284 542.500 284.500 546Q280 549.500 274 549.500Q267 549.500 265 546.500z" fill="#84857e"/>
<path d="M711.3 636.0L715.0 638.0L736.3 642.5L745.0 640.0L745.0 823.5L736.3 826.0L715.0 822.0L711.3 820.0z" fill="url(#gC)" stroke="#1f1f1a" stroke-width="1.0" stroke-linejoin="round" />
<path d="M745.0 640.0L755.5 632.0L755.5 815.5L745.0 823.5z" fill="#65665f" stroke="#1f1f1a" stroke-width="1.0" stroke-linejoin="round" />
<path d="M715.0 638.0L715.0 822.0" fill="none" stroke="#1f1f1a" stroke-width="0.7" stroke-linecap="round" />
<path d="M736.3 642.5L736.3 826.0" fill="none" stroke="#1f1f1a" stroke-width="0.8" stroke-linecap="round" />
<path d="M711.3 657.5L715.0 659.0L736.3 663.5L745.0 661.5L755.5 653.5" fill="none" stroke="#1f1f1a" stroke-width="0.8" stroke-linecap="round" />
<path d="M711.3 670.0L715.0 671.5L736.3 676.0L745.0 674.0L755.5 666.0" fill="none" stroke="#1f1f1a" stroke-width="0.8" stroke-linecap="round" />
<path d="M711 635.500Q711.500 631 721 628.500L748 629Q756 630 755.500 633L746 640Q742 643 736 642.500L715 638.500Q711 637.500 711 635.500z" fill="#8c8d86" stroke="#1f1f1a" stroke-width=".9"/>
<ellipse cx="733.4" cy="636" rx="10.600" ry="4.600" fill="#6f7069" stroke="#1f1f1a" stroke-width="1"/>
<path d="M724.500 637Q727 632.500 737 632.500Q743 633.500 743.500 636.500Q739 640.200 733 640.200Q727 640 724.500 637z" fill="#84857e"/>
<path d="M253.4 512.1L253.5 512.7L253.8 513.2L254.3 513.7L255.1 514.2L256.2 514.7L257.4 515.1L258.9 515.6L260.7 515.9L730.4 609.7L730.4 625.9L260.7 532.9L258.9 532.5L257.4 532.1L256.2 531.7L255.1 531.2L254.3 530.7L253.8 530.2L253.5 529.7L253.4 529.1z" fill="#a7a8a1" stroke="#1f1f1a" stroke-width="0.9" stroke-linejoin="round" />
<path d="M730.4 609.7L732.2 610.0L733.9 610.2L735.6 610.4L737.2 610.4L738.7 610.4L740.1 610.3L741.5 610.1L742.8 609.8L744.0 609.4L745.2 608.9L746.3 608.3L747.3 607.7L747.3 623.9L746.3 624.5L745.2 625.1L744.0 625.6L742.8 626.0L741.5 626.3L740.1 626.5L738.7 626.6L737.2 626.7L735.6 626.6L733.9 626.5L732.2 626.2L730.4 625.9z" fill="#9c9d96" stroke="#1f1f1a" stroke-width="0.9" stroke-linejoin="round" />
<path d="M747.3 607.7L998.5 424.4L998.5 440.2L747.3 623.9z" fill="url(#gPR)" stroke="#1f1f1a" stroke-width="0.9" stroke-linejoin="round" />
<path d="M998.5 424.4L999.4 423.7L1000.0 423.0L1000.3 422.4L1000.5 421.8L1000.5 437.6L1000.3 438.2L1000.0 438.8L999.4 439.5L998.5 440.2z" fill="#55554f" stroke="#1f1f1a" stroke-width="0.9" stroke-linejoin="round" />
<path d="M260.7 515.9L260.7 532.9" fill="none" stroke="#1f1f1a" stroke-width="0.7" stroke-linecap="round" />
<path d="M506.6 326.2L255.4 509.5Q249.6 513.7 260.7 515.9L730.4 609.7Q741.5 611.9 747.3 607.7L998.5 424.4Q1004.3 420.2 993.2 417.9L523.5 324.2Q512.4 322.0 506.6 326.2z" fill="#4a80cb" stroke="#2c4f8c" stroke-width="1"/>
<path d="M260.7 515.9L730.4 609.7" fill="none" stroke="#cfd6e6" stroke-width="0.9" stroke-linecap="round" transform="translate(0,0.9)"/>
<path d="M747.3 607.7L998.5 424.4" fill="none" stroke="#aeb9d3" stroke-width="0.8" stroke-linecap="round" transform="translate(0.3,0.9)"/>
<g id="ph"><ellipse rx="7.300" ry="2.850" fill="#cbccc8" stroke="#23407c" stroke-width="1.150"/><ellipse cy=".05" rx="4.200" ry="1.250" fill="#6f6449"/></g>
<g transform="translate(516.6 333.5)"><ellipse rx="7.300" ry="2.850" fill="#cbccc8" stroke="#23407c" stroke-width="1.150"/><ellipse cy=".05" rx="4.200" ry="1.250" fill="#6f6449"/></g>
<g transform="translate(593.1 348.8)"><ellipse rx="7.300" ry="2.850" fill="#cbccc8" stroke="#23407c" stroke-width="1.150"/><ellipse cy=".05" rx="4.200" ry="1.250" fill="#6f6449"/></g>
<g transform="translate(631.4 356.4)"><ellipse rx="7.300" ry="2.850" fill="#cbccc8" stroke="#23407c" stroke-width="1.150"/><ellipse cy=".05" rx="4.200" ry="1.250" fill="#6f6449"/></g>
<g transform="translate(707.9 371.7)"><ellipse rx="7.300" ry="2.850" fill="#cbccc8" stroke="#23407c" stroke-width="1.150"/><ellipse cy=".05" rx="4.200" ry="1.250" fill="#6f6449"/></g>
<g transform="translate(746.1 379.3)"><ellipse rx="7.300" ry="2.850" fill="#cbccc8" stroke="#23407c" stroke-width="1.150"/><ellipse cy=".05" rx="4.200" ry="1.250" fill="#6f6449"/></g>
<g transform="translate(784.4 386.9)"><ellipse rx="7.300" ry="2.850" fill="#cbccc8" stroke="#23407c" stroke-width="1.150"/><ellipse cy=".05" rx="4.200" ry="1.250" fill="#6f6449"/></g>
<g transform="translate(822.6 394.6)"><ellipse rx="7.300" ry="2.850" fill="#cbccc8" stroke="#23407c" stroke-width="1.150"/><ellipse cy=".05" rx="4.200" ry="1.250" fill="#6f6449"/></g>
<g transform="translate(860.9 402.2)"><ellipse rx="7.300" ry="2.850" fill="#cbccc8" stroke="#23407c" stroke-width="1.150"/><ellipse cy=".05" rx="4.200" ry="1.250" fill="#6f6449"/></g>
<g transform="translate(899.1 409.8)"><ellipse rx="7.300" ry="2.850" fill="#cbccc8" stroke="#23407c" stroke-width="1.150"/><ellipse cy=".05" rx="4.200" ry="1.250" fill="#6f6449"/></g>
<g transform="translate(937.4 417.5)"><ellipse rx="7.300" ry="2.850" fill="#cbccc8" stroke="#23407c" stroke-width="1.150"/><ellipse cy=".05" rx="4.200" ry="1.250" fill="#6f6449"/></g>
<g transform="translate(975.6 425.1)"><ellipse rx="7.300" ry="2.850" fill="#cbccc8" stroke="#23407c" stroke-width="1.150"/><ellipse cy=".05" rx="4.200" ry="1.250" fill="#6f6449"/></g>
<g transform="translate(496.6 348.1)"><ellipse rx="7.300" ry="2.850" fill="#cbccc8" stroke="#23407c" stroke-width="1.150"/><ellipse cy=".05" rx="4.200" ry="1.250" fill="#6f6449"/></g>
<g transform="translate(534.9 355.7)"><ellipse rx="7.300" ry="2.850" fill="#cbccc8" stroke="#23407c" stroke-width="1.150"/><ellipse cy=".05" rx="4.200" ry="1.250" fill="#6f6449"/></g>
<g transform="translate(573.1 363.3)"><ellipse rx="7.300" ry="2.850" fill="#cbccc8" stroke="#23407c" stroke-width="1.150"/><ellipse cy=".05" rx="4.200" ry="1.250" fill="#6f6449"/></g>
<g transform="translate(611.4 371.0)"><ellipse rx="7.300" ry="2.850" fill="#cbccc8" stroke="#23407c" stroke-width="1.150"/><ellipse cy=".05" rx="4.200" ry="1.250" fill="#6f6449"/></g>
<g transform="translate(649.6 378.6)"><ellipse rx="7.300" ry="2.850" fill="#cbccc8" stroke="#23407c" stroke-width="1.150"/><ellipse cy=".05" rx="4.200" ry="1.250" fill="#6f6449"/></g>
<g transform="translate(687.9 386.2)"><ellipse rx="7.300" ry="2.850" fill="#cbccc8" stroke="#23407c" stroke-width="1.150"/><ellipse cy=".05" rx="4.200" ry="1.250" fill="#6f6449"/></g>
<g transform="translate(726.1 393.9)"><ellipse rx="7.300" ry="2.850" fill="#cbccc8" stroke="#23407c" stroke-width="1.150"/><ellipse cy=".05" rx="4.200" ry="1.250" fill="#6f6449"/></g>
<g transform="translate(764.4 401.5)"><ellipse rx="7.300" ry="2.850" fill="#cbccc8" stroke="#23407c" stroke-width="1.150"/><ellipse cy=".05" rx="4.200" ry="1.250" fill="#6f6449"/></g>
<g transform="translate(802.6 409.1)"><ellipse rx="7.300" ry="2.850" fill="#cbccc8" stroke="#23407c" stroke-width="1.150"/><ellipse cy=".05" rx="4.200" ry="1.250" fill="#6f6449"/></g>
<g transform="translate(840.9 416.8)"><ellipse rx="7.300" ry="2.850" fill="#cbccc8" stroke="#23407c" stroke-width="1.150"/><ellipse cy=".05" rx="4.200" ry="1.250" fill="#6f6449"/></g>
<g transform="translate(879.1 424.4)"><ellipse rx="7.300" ry="2.850" fill="#cbccc8" stroke="#23407c" stroke-width="1.150"/><ellipse cy=".05" rx="4.200" ry="1.250" fill="#6f6449"/></g>
<g transform="translate(917.4 432.0)"><ellipse rx="7.300" ry="2.850" fill="#cbccc8" stroke="#23407c" stroke-width="1.150"/><ellipse cy=".05" rx="4.200" ry="1.250" fill="#6f6449"/></g>
<g transform="translate(476.6 362.6)"><ellipse rx="7.300" ry="2.850" fill="#cbccc8" stroke="#23407c" stroke-width="1.150"/><ellipse cy=".05" rx="4.200" ry="1.250" fill="#6f6449"/></g>
<g transform="translate(514.9 370.3)"><ellipse rx="7.300" ry="2.850" fill="#cbccc8" stroke="#23407c" stroke-width="1.150"/><ellipse cy=".05" rx="4.200" ry="1.250" fill="#6f6449"/></g>
<g transform="translate(553.1 377.9)"><ellipse rx="7.300" ry="2.850" fill="#cbccc8" stroke="#23407c" stroke-width="1.150"/><ellipse cy=".05" rx="4.200" ry="1.250" fill="#6f6449"/></g>
<g transform="translate(591.4 385.5)"><ellipse rx="7.300" ry="2.850" fill="#cbccc8" stroke="#23407c" stroke-width="1.150"/><ellipse cy=".05" rx="4.200" ry="1.250" fill="#6f6449"/></g>
<g transform="translate(629.6 393.2)"><ellipse rx="7.300" ry="2.850" fill="#cbccc8" stroke="#23407c" stroke-width="1.150"/><ellipse cy=".05" rx="4.200" ry="1.250" fill="#6f6449"/></g>
<g transform="translate(667.9 400.8)"><ellipse rx="7.300" ry="2.850" fill="#cbccc8" stroke="#23407c" stroke-width="1.150"/><ellipse cy=".05" rx="4.200" ry="1.250" fill="#6f6449"/></g>
<g transform="translate(706.1 408.4)"><ellipse rx="7.300" ry="2.850" fill="#cbccc8" stroke="#23407c" stroke-width="1.150"/><ellipse cy=".05" rx="4.200" ry="1.250" fill="#6f6449"/></g>
<g transform="translate(744.4 416.1)"><ellipse rx="7.300" ry="2.850" fill="#cbccc8" stroke="#23407c" stroke-width="1.150"/><ellipse cy=".05" rx="4.200" ry="1.250" fill="#6f6449"/></g>
<g transform="translate(782.6 423.7)"><ellipse rx="7.300" ry="2.850" fill="#cbccc8" stroke="#23407c" stroke-width="1.150"/><ellipse cy=".05" rx="4.200" ry="1.250" fill="#6f6449"/></g>
<g transform="translate(820.9 431.3)"><ellipse rx="7.300" ry="2.850" fill="#cbccc8" stroke="#23407c" stroke-width="1.150"/><ellipse cy=".05" rx="4.200" ry="1.250" fill="#6f6449"/></g>
<g transform="translate(859.1 439.0)"><ellipse rx="7.300" ry="2.850" fill="#cbccc8" stroke="#23407c" stroke-width="1.150"/><ellipse cy=".05" rx="4.200" ry="1.250" fill="#6f6449"/></g>
<g transform="translate(897.4 446.6)"><ellipse rx="7.300" ry="2.850" fill="#cbccc8" stroke="#23407c" stroke-width="1.150"/><ellipse cy=".05" rx="4.200" ry="1.250" fill="#6f6449"/></g>
<g transform="translate(456.7 377.2)"><ellipse rx="7.300" ry="2.850" fill="#cbccc8" stroke="#23407c" stroke-width="1.150"/><ellipse cy=".05" rx="4.200" ry="1.250" fill="#6f6449"/></g>
<g transform="translate(494.9 384.9)"><ellipse rx="7.300" ry="2.850" fill="#cbccc8" stroke="#23407c" stroke-width="1.150"/><ellipse cy=".05" rx="4.200" ry="1.250" fill="#6f6449"/></g>
<g transform="translate(533.2 392.5)"><ellipse rx="7.300" ry="2.850" fill="#cbccc8" stroke="#23407c" stroke-width="1.150"/><ellipse cy=".05" rx="4.200" ry="1.250" fill="#6f6449"/></g>
<g transform="translate(571.4 400.1)"><ellipse rx="7.300" ry="2.850" fill="#cbccc8" stroke="#23407c" stroke-width="1.150"/><ellipse cy=".05" rx="4.200" ry="1.250" fill="#6f6449"/></g>
<g transform="translate(609.7 407.8)"><ellipse rx="7.300" ry="2.850" fill="#cbccc8" stroke="#23407c" stroke-width="1.150"/><ellipse cy=".05" rx="4.200" ry="1.250" fill="#6f6449"/></g>
<g transform="translate(647.9 415.4)"><ellipse rx="7.300" ry="2.850" fill="#cbccc8" stroke="#23407c" stroke-width="1.150"/><ellipse cy=".05" rx="4.200" ry="1.250" fill="#6f6449"/></g>
<g transform="translate(686.2 423.0)"><ellipse rx="7.300" ry="2.850" fill="#cbccc8" stroke="#23407c" stroke-width="1.150"/><ellipse cy=".05" rx="4.200" ry="1.250" fill="#6f6449"/></g>
<g transform="translate(724.4 430.7)"><ellipse rx="7.300" ry="2.850" fill="#cbccc8" stroke="#23407c" stroke-width="1.150"/><ellipse cy=".05" rx="4.200" ry="1.250" fill="#6f6449"/></g>
<g transform="translate(762.7 438.3)"><ellipse rx="7.300" ry="2.850" fill="#cbccc8" stroke="#23407c" stroke-width="1.150"/><ellipse cy=".05" rx="4.200" ry="1.250" fill="#6f6449"/></g>
<g transform="translate(800.9 445.9)"><ellipse rx="7.300" ry="2.850" fill="#cbccc8" stroke="#23407c" stroke-width="1.150"/><ellipse cy=".05" rx="4.200" ry="1.250" fill="#6f6449"/></g>
<g transform="translate(839.2 453.6)"><ellipse rx="7.300" ry="2.850" fill="#cbccc8" stroke="#23407c" stroke-width="1.150"/><ellipse cy=".05" rx="4.200" ry="1.250" fill="#6f6449"/></g>
<g transform="translate(877.4 461.2)"><ellipse rx="7.300" ry="2.850" fill="#cbccc8" stroke="#23407c" stroke-width="1.150"/><ellipse cy=".05" rx="4.200" ry="1.250" fill="#6f6449"/></g>
<g transform="translate(915.7 468.8)"><ellipse rx="7.300" ry="2.850" fill="#cbccc8" stroke="#23407c" stroke-width="1.150"/><ellipse cy=".05" rx="4.200" ry="1.250" fill="#6f6449"/></g>
<g transform="translate(436.7 391.8)"><ellipse rx="7.300" ry="2.850" fill="#cbccc8" stroke="#23407c" stroke-width="1.150"/><ellipse cy=".05" rx="4.200" ry="1.250" fill="#6f6449"/></g>
<g transform="translate(474.9 399.4)"><ellipse rx="7.300" ry="2.850" fill="#cbccc8" stroke="#23407c" stroke-width="1.150"/><ellipse cy=".05" rx="4.200" ry="1.250" fill="#6f6449"/></g>
<g transform="translate(513.2 407.1)"><ellipse rx="7.300" ry="2.850" fill="#cbccc8" stroke="#23407c" stroke-width="1.150"/><ellipse cy=".05" rx="4.200" ry="1.250" fill="#6f6449"/></g>
<g transform="translate(551.4 414.7)"><ellipse rx="7.300" ry="2.850" fill="#cbccc8" stroke="#23407c" stroke-width="1.150"/><ellipse cy=".05" rx="4.200" ry="1.250" fill="#6f6449"/></g>
<g transform="translate(589.7 422.3)"><ellipse rx="7.300" ry="2.850" fill="#cbccc8" stroke="#23407c" stroke-width="1.150"/><ellipse cy=".05" rx="4.200" ry="1.250" fill="#6f6449"/></g>
<g transform="translate(627.9 430.0)"><ellipse rx="7.300" ry="2.850" fill="#cbccc8" stroke="#23407c" stroke-width="1.150"/><ellipse cy=".05" rx="4.200" ry="1.250" fill="#6f6449"/></g>
<g transform="translate(666.2 437.6)"><ellipse rx="7.300" ry="2.850" fill="#cbccc8" stroke="#23407c" stroke-width="1.150"/><ellipse cy=".05" rx="4.200" ry="1.250" fill="#6f6449"/></g>
<g transform="translate(704.4 445.2)"><ellipse rx="7.300" ry="2.850" fill="#cbccc8" stroke="#23407c" stroke-width="1.150"/><ellipse cy=".05" rx="4.200" ry="1.250" fill="#6f6449"/></g>
<g transform="translate(742.7 452.9)"><ellipse rx="7.300" ry="2.850" fill="#cbccc8" stroke="#23407c" stroke-width="1.150"/><ellipse cy=".05" rx="4.200" ry="1.250" fill="#6f6449"/></g>
<g transform="translate(780.9 460.5)"><ellipse rx="7.300" ry="2.850" fill="#cbccc8" stroke="#23407c" stroke-width="1.150"/><ellipse cy=".05" rx="4.200" ry="1.250" fill="#6f6449"/></g>
<g transform="translate(819.2 468.1)"><ellipse rx="7.300" ry="2.850" fill="#cbccc8" stroke="#23407c" stroke-width="1.150"/><ellipse cy=".05" rx="4.200" ry="1.250" fill="#6f6449"/></g>
<g transform="translate(857.4 475.8)"><ellipse rx="7.300" ry="2.850" fill="#cbccc8" stroke="#23407c" stroke-width="1.150"/><ellipse cy=".05" rx="4.200" ry="1.250" fill="#6f6449"/></g>
<g transform="translate(895.7 483.4)"><ellipse rx="7.300" ry="2.850" fill="#cbccc8" stroke="#23407c" stroke-width="1.150"/><ellipse cy=".05" rx="4.200" ry="1.250" fill="#6f6449"/></g>
<g transform="translate(416.7 406.4)"><ellipse rx="7.300" ry="2.850" fill="#cbccc8" stroke="#23407c" stroke-width="1.150"/><ellipse cy=".05" rx="4.200" ry="1.250" fill="#6f6449"/></g>
<g transform="translate(455.0 414.0)"><ellipse rx="7.300" ry="2.850" fill="#cbccc8" stroke="#23407c" stroke-width="1.150"/><ellipse cy=".05" rx="4.200" ry="1.250" fill="#6f6449"/></g>
<g transform="translate(493.2 421.6)"><ellipse rx="7.300" ry="2.850" fill="#cbccc8" stroke="#23407c" stroke-width="1.150"/><ellipse cy=".05" rx="4.200" ry="1.250" fill="#6f6449"/></g>
<g transform="translate(531.5 429.3)"><ellipse rx="7.300" ry="2.850" fill="#cbccc8" stroke="#23407c" stroke-width="1.150"/><ellipse cy=".05" rx="4.200" ry="1.250" fill="#6f6449"/></g>
<g transform="translate(569.7 436.9)"><ellipse rx="7.300" ry="2.850" fill="#cbccc8" stroke="#23407c" stroke-width="1.150"/><ellipse cy=".05" rx="4.200" ry="1.250" fill="#6f6449"/></g>
<g transform="translate(608.0 444.5)"><ellipse rx="7.300" ry="2.850" fill="#cbccc8" stroke="#23407c" stroke-width="1.150"/><ellipse cy=".05" rx="4.200" ry="1.250" fill="#6f6449"/></g>
<g transform="translate(646.2 452.2)"><ellipse rx="7.300" ry="2.850" fill="#cbccc8" stroke="#23407c" stroke-width="1.150"/><ellipse cy=".05" rx="4.200" ry="1.250" fill="#6f6449"/></g>
<g transform="translate(684.5 459.8)"><ellipse rx="7.300" ry="2.850" fill="#cbccc8" stroke="#23407c" stroke-width="1.150"/><ellipse cy=".05" rx="4.200" ry="1.250" fill="#6f6449"/></g>
<g transform="translate(722.7 467.4)"><ellipse rx="7.300" ry="2.850" fill="#cbccc8" stroke="#23407c" stroke-width="1.150"/><ellipse cy=".05" rx="4.200" ry="1.250" fill="#6f6449"/></g>
<g transform="translate(761.0 475.1)"><ellipse rx="7.300" ry="2.850" fill="#cbccc8" stroke="#23407c" stroke-width="1.150"/><ellipse cy=".05" rx="4.200" ry="1.250" fill="#6f6449"/></g>
<g transform="translate(799.2 482.7)"><ellipse rx="7.300" ry="2.850" fill="#cbccc8" stroke="#23407c" stroke-width="1.150"/><ellipse cy=".05" rx="4.200" ry="1.250" fill="#6f6449"/></g>
<g transform="translate(837.5 490.3)"><ellipse rx="7.300" ry="2.850" fill="#cbccc8" stroke="#23407c" stroke-width="1.150"/><ellipse cy=".05" rx="4.200" ry="1.250" fill="#6f6449"/></g>
<g transform="translate(875.7 498.0)"><ellipse rx="7.300" ry="2.850" fill="#cbccc8" stroke="#23407c" stroke-width="1.150"/><ellipse cy=".05" rx="4.200" ry="1.250" fill="#6f6449"/></g>
<g transform="translate(435.0 428.6)"><ellipse rx="7.300" ry="2.850" fill="#cbccc8" stroke="#23407c" stroke-width="1.150"/><ellipse cy=".05" rx="4.200" ry="1.250" fill="#6f6449"/></g>
<g transform="translate(473.2 436.2)"><ellipse rx="7.300" ry="2.850" fill="#cbccc8" stroke="#23407c" stroke-width="1.150"/><ellipse cy=".05" rx="4.200" ry="1.250" fill="#6f6449"/></g>
<g transform="translate(511.5 443.8)"><ellipse rx="7.300" ry="2.850" fill="#cbccc8" stroke="#23407c" stroke-width="1.150"/><ellipse cy=".05" rx="4.200" ry="1.250" fill="#6f6449"/></g>
<g transform="translate(549.7 451.5)"><ellipse rx="7.300" ry="2.850" fill="#cbccc8" stroke="#23407c" stroke-width="1.150"/><ellipse cy=".05" rx="4.200" ry="1.250" fill="#6f6449"/></g>
<g transform="translate(588.0 459.1)"><ellipse rx="7.300" ry="2.850" fill="#cbccc8" stroke="#23407c" stroke-width="1.150"/><ellipse cy=".05" rx="4.200" ry="1.250" fill="#6f6449"/></g>
<g transform="translate(626.2 466.7)"><ellipse rx="7.300" ry="2.850" fill="#cbccc8" stroke="#23407c" stroke-width="1.150"/><ellipse cy=".05" rx="4.200" ry="1.250" fill="#6f6449"/></g>
<g transform="translate(664.5 474.4)"><ellipse rx="7.300" ry="2.850" fill="#cbccc8" stroke="#23407c" stroke-width="1.150"/><ellipse cy=".05" rx="4.200" ry="1.250" fill="#6f6449"/></g>
<g transform="translate(702.7 482.0)"><ellipse rx="7.300" ry="2.850" fill="#cbccc8" stroke="#23407c" stroke-width="1.150"/><ellipse cy=".05" rx="4.200" ry="1.250" fill="#6f6449"/></g>
<g transform="translate(741.0 489.6)"><ellipse rx="7.300" ry="2.850" fill="#cbccc8" stroke="#23407c" stroke-width="1.150"/><ellipse cy=".05" rx="4.200" ry="1.250" fill="#6f6449"/></g>
<g transform="translate(779.2 497.3)"><ellipse rx="7.300" ry="2.850" fill="#cbccc8" stroke="#23407c" stroke-width="1.150"/><ellipse cy=".05" rx="4.200" ry="1.250" fill="#6f6449"/></g>
<g transform="translate(817.5 504.9)"><ellipse rx="7.300" ry="2.850" fill="#cbccc8" stroke="#23407c" stroke-width="1.150"/><ellipse cy=".05" rx="4.200" ry="1.250" fill="#6f6449"/></g>
<g transform="translate(376.7 435.5)"><ellipse rx="7.300" ry="2.850" fill="#cbccc8" stroke="#23407c" stroke-width="1.150"/><ellipse cy=".05" rx="4.200" ry="1.250" fill="#6f6449"/></g>
<g transform="translate(415.0 443.2)"><ellipse rx="7.300" ry="2.850" fill="#cbccc8" stroke="#23407c" stroke-width="1.150"/><ellipse cy=".05" rx="4.200" ry="1.250" fill="#6f6449"/></g>
<g transform="translate(453.2 450.8)"><ellipse rx="7.300" ry="2.850" fill="#cbccc8" stroke="#23407c" stroke-width="1.150"/><ellipse cy=".05" rx="4.200" ry="1.250" fill="#6f6449"/></g>
<g transform="translate(491.5 458.4)"><ellipse rx="7.300" ry="2.850" fill="#cbccc8" stroke="#23407c" stroke-width="1.150"/><ellipse cy=".05" rx="4.200" ry="1.250" fill="#6f6449"/></g>
<g transform="translate(529.7 466.1)"><ellipse rx="7.300" ry="2.850" fill="#cbccc8" stroke="#23407c" stroke-width="1.150"/><ellipse cy=".05" rx="4.200" ry="1.250" fill="#6f6449"/></g>
<g transform="translate(568.0 473.7)"><ellipse rx="7.300" ry="2.850" fill="#cbccc8" stroke="#23407c" stroke-width="1.150"/><ellipse cy=".05" rx="4.200" ry="1.250" fill="#6f6449"/></g>
<g transform="translate(606.2 481.3)"><ellipse rx="7.300" ry="2.850" fill="#cbccc8" stroke="#23407c" stroke-width="1.150"/><ellipse cy=".05" rx="4.200" ry="1.250" fill="#6f6449"/></g>
<g transform="translate(644.5 489.0)"><ellipse rx="7.300" ry="2.850" fill="#cbccc8" stroke="#23407c" stroke-width="1.150"/><ellipse cy=".05" rx="4.200" ry="1.250" fill="#6f6449"/></g>
<g transform="translate(682.7 496.6)"><ellipse rx="7.300" ry="2.850" fill="#cbccc8" stroke="#23407c" stroke-width="1.150"/><ellipse cy=".05" rx="4.200" ry="1.250" fill="#6f6449"/></g>
<g transform="translate(721.0 504.2)"><ellipse rx="7.300" ry="2.850" fill="#cbccc8" stroke="#23407c" stroke-width="1.150"/><ellipse cy=".05" rx="4.200" ry="1.250" fill="#6f6449"/></g>
<g transform="translate(759.2 511.9)"><ellipse rx="7.300" ry="2.850" fill="#cbccc8" stroke="#23407c" stroke-width="1.150"/><ellipse cy=".05" rx="4.200" ry="1.250" fill="#6f6449"/></g>
<g transform="translate(797.5 519.5)"><ellipse rx="7.300" ry="2.850" fill="#cbccc8" stroke="#23407c" stroke-width="1.150"/><ellipse cy=".05" rx="4.200" ry="1.250" fill="#6f6449"/></g>
<g transform="translate(835.7 527.1)"><ellipse rx="7.300" ry="2.850" fill="#cbccc8" stroke="#23407c" stroke-width="1.150"/><ellipse cy=".05" rx="4.200" ry="1.250" fill="#6f6449"/></g>
<g transform="translate(356.8 450.1)"><ellipse rx="7.300" ry="2.850" fill="#cbccc8" stroke="#23407c" stroke-width="1.150"/><ellipse cy=".05" rx="4.200" ry="1.250" fill="#6f6449"/></g>
<g transform="translate(395.0 457.7)"><ellipse rx="7.300" ry="2.850" fill="#cbccc8" stroke="#23407c" stroke-width="1.150"/><ellipse cy=".05" rx="4.200" ry="1.250" fill="#6f6449"/></g>
<g transform="translate(433.3 465.4)"><ellipse rx="7.300" ry="2.850" fill="#cbccc8" stroke="#23407c" stroke-width="1.150"/><ellipse cy=".05" rx="4.200" ry="1.250" fill="#6f6449"/></g>
<g transform="translate(471.5 473.0)"><ellipse rx="7.300" ry="2.850" fill="#cbccc8" stroke="#23407c" stroke-width="1.150"/><ellipse cy=".05" rx="4.200" ry="1.250" fill="#6f6449"/></g>
<g transform="translate(509.8 480.6)"><ellipse rx="7.300" ry="2.850" fill="#cbccc8" stroke="#23407c" stroke-width="1.150"/><ellipse cy=".05" rx="4.200" ry="1.250" fill="#6f6449"/></g>
<g transform="translate(548.0 488.3)"><ellipse rx="7.300" ry="2.850" fill="#cbccc8" stroke="#23407c" stroke-width="1.150"/><ellipse cy=".05" rx="4.200" ry="1.250" fill="#6f6449"/></g>
<g transform="translate(586.3 495.9)"><ellipse rx="7.300" ry="2.850" fill="#cbccc8" stroke="#23407c" stroke-width="1.150"/><ellipse cy=".05" rx="4.200" ry="1.250" fill="#6f6449"/></g>
<g transform="translate(624.5 503.5)"><ellipse rx="7.300" ry="2.850" fill="#cbccc8" stroke="#23407c" stroke-width="1.150"/><ellipse cy=".05" rx="4.200" ry="1.250" fill="#6f6449"/></g>
<g transform="translate(662.8 511.2)"><ellipse rx="7.300" ry="2.850" fill="#cbccc8" stroke="#23407c" stroke-width="1.150"/><ellipse cy=".05" rx="4.200" ry="1.250" fill="#6f6449"/></g>
<g transform="translate(701.0 518.8)"><ellipse rx="7.300" ry="2.850" fill="#cbccc8" stroke="#23407c" stroke-width="1.150"/><ellipse cy=".05" rx="4.200" ry="1.250" fill="#6f6449"/></g>
<g transform="translate(739.3 526.4)"><ellipse rx="7.300" ry="2.850" fill="#cbccc8" stroke="#23407c" stroke-width="1.150"/><ellipse cy=".05" rx="4.200" ry="1.250" fill="#6f6449"/></g>
<g transform="translate(777.5 534.1)"><ellipse rx="7.300" ry="2.850" fill="#cbccc8" stroke="#23407c" stroke-width="1.150"/><ellipse cy=".05" rx="4.200" ry="1.250" fill="#6f6449"/></g>
<g transform="translate(815.8 541.7)"><ellipse rx="7.300" ry="2.850" fill="#cbccc8" stroke="#23407c" stroke-width="1.150"/><ellipse cy=".05" rx="4.200" ry="1.250" fill="#6f6449"/></g>
<g transform="translate(336.8 464.7)"><ellipse rx="7.300" ry="2.850" fill="#cbccc8" stroke="#23407c" stroke-width="1.150"/><ellipse cy=".05" rx="4.200" ry="1.250" fill="#6f6449"/></g>
<g transform="translate(375.0 472.3)"><ellipse rx="7.300" ry="2.850" fill="#cbccc8" stroke="#23407c" stroke-width="1.150"/><ellipse cy=".05" rx="4.200" ry="1.250" fill="#6f6449"/></g>
<g transform="translate(413.3 479.9)"><ellipse rx="7.300" ry="2.850" fill="#cbccc8" stroke="#23407c" stroke-width="1.150"/><ellipse cy=".05" rx="4.200" ry="1.250" fill="#6f6449"/></g>
<g transform="translate(451.5 487.6)"><ellipse rx="7.300" ry="2.850" fill="#cbccc8" stroke="#23407c" stroke-width="1.150"/><ellipse cy=".05" rx="4.200" ry="1.250" fill="#6f6449"/></g>
<g transform="translate(489.8 495.2)"><ellipse rx="7.300" ry="2.850" fill="#cbccc8" stroke="#23407c" stroke-width="1.150"/><ellipse cy=".05" rx="4.200" ry="1.250" fill="#6f6449"/></g>
<g transform="translate(528.0 502.8)"><ellipse rx="7.300" ry="2.850" fill="#cbccc8" stroke="#23407c" stroke-width="1.150"/><ellipse cy=".05" rx="4.200" ry="1.250" fill="#6f6449"/></g>
<g transform="translate(566.3 510.5)"><ellipse rx="7.300" ry="2.850" fill="#cbccc8" stroke="#23407c" stroke-width="1.150"/><ellipse cy=".05" rx="4.200" ry="1.250" fill="#6f6449"/></g>
<g transform="translate(604.5 518.1)"><ellipse rx="7.300" ry="2.850" fill="#cbccc8" stroke="#23407c" stroke-width="1.150"/><ellipse cy=".05" rx="4.200" ry="1.250" fill="#6f6449"/></g>
<g transform="translate(642.8 525.7)"><ellipse rx="7.300" ry="2.850" fill="#cbccc8" stroke="#23407c" stroke-width="1.150"/><ellipse cy=".05" rx="4.200" ry="1.250" fill="#6f6449"/></g>
<g transform="translate(681.0 533.4)"><ellipse rx="7.300" ry="2.850" fill="#cbccc8" stroke="#23407c" stroke-width="1.150"/><ellipse cy=".05" rx="4.200" ry="1.250" fill="#6f6449"/></g>
<g transform="translate(719.3 541.0)"><ellipse rx="7.300" ry="2.850" fill="#cbccc8" stroke="#23407c" stroke-width="1.150"/><ellipse cy=".05" rx="4.200" ry="1.250" fill="#6f6449"/></g>
<g transform="translate(757.5 548.6)"><ellipse rx="7.300" ry="2.850" fill="#cbccc8" stroke="#23407c" stroke-width="1.150"/><ellipse cy=".05" rx="4.200" ry="1.250" fill="#6f6449"/></g>
<g transform="translate(795.8 556.3)"><ellipse rx="7.300" ry="2.850" fill="#cbccc8" stroke="#23407c" stroke-width="1.150"/><ellipse cy=".05" rx="4.200" ry="1.250" fill="#6f6449"/></g>
<g transform="translate(316.8 479.2)"><ellipse rx="7.300" ry="2.850" fill="#cbccc8" stroke="#23407c" stroke-width="1.150"/><ellipse cy=".05" rx="4.200" ry="1.250" fill="#6f6449"/></g>
<g transform="translate(355.1 486.9)"><ellipse rx="7.300" ry="2.850" fill="#cbccc8" stroke="#23407c" stroke-width="1.150"/><ellipse cy=".05" rx="4.200" ry="1.250" fill="#6f6449"/></g>
<g transform="translate(393.3 494.5)"><ellipse rx="7.300" ry="2.850" fill="#cbccc8" stroke="#23407c" stroke-width="1.150"/><ellipse cy=".05" rx="4.200" ry="1.250" fill="#6f6449"/></g>
<g transform="translate(431.6 502.1)"><ellipse rx="7.300" ry="2.850" fill="#cbccc8" stroke="#23407c" stroke-width="1.150"/><ellipse cy=".05" rx="4.200" ry="1.250" fill="#6f6449"/></g>
<g transform="translate(469.8 509.8)"><ellipse rx="7.300" ry="2.850" fill="#cbccc8" stroke="#23407c" stroke-width="1.150"/><ellipse cy=".05" rx="4.200" ry="1.250" fill="#6f6449"/></g>
<g transform="translate(508.1 517.4)"><ellipse rx="7.300" ry="2.850" fill="#cbccc8" stroke="#23407c" stroke-width="1.150"/><ellipse cy=".05" rx="4.200" ry="1.250" fill="#6f6449"/></g>
<g transform="translate(546.3 525.0)"><ellipse rx="7.300" ry="2.850" fill="#cbccc8" stroke="#23407c" stroke-width="1.150"/><ellipse cy=".05" rx="4.200" ry="1.250" fill="#6f6449"/></g>
<g transform="translate(584.5 532.7)"><ellipse rx="7.300" ry="2.850" fill="#cbccc8" stroke="#23407c" stroke-width="1.150"/><ellipse cy=".05" rx="4.200" ry="1.250" fill="#6f6449"/></g>
<g transform="translate(622.8 540.3)"><ellipse rx="7.300" ry="2.850" fill="#cbccc8" stroke="#23407c" stroke-width="1.150"/><ellipse cy=".05" rx="4.200" ry="1.250" fill="#6f6449"/></g>
<g transform="translate(661.0 547.9)"><ellipse rx="7.300" ry="2.850" fill="#cbccc8" stroke="#23407c" stroke-width="1.150"/><ellipse cy=".05" rx="4.200" ry="1.250" fill="#6f6449"/></g>
<g transform="translate(699.3 555.6)"><ellipse rx="7.300" ry="2.850" fill="#cbccc8" stroke="#23407c" stroke-width="1.150"/><ellipse cy=".05" rx="4.200" ry="1.250" fill="#6f6449"/></g>
<g transform="translate(737.5 563.2)"><ellipse rx="7.300" ry="2.850" fill="#cbccc8" stroke="#23407c" stroke-width="1.150"/><ellipse cy=".05" rx="4.200" ry="1.250" fill="#6f6449"/></g>
<g transform="translate(775.8 570.8)"><ellipse rx="7.300" ry="2.850" fill="#cbccc8" stroke="#23407c" stroke-width="1.150"/><ellipse cy=".05" rx="4.200" ry="1.250" fill="#6f6449"/></g>
<g transform="translate(296.8 493.8)"><ellipse rx="7.300" ry="2.850" fill="#cbccc8" stroke="#23407c" stroke-width="1.150"/><ellipse cy=".05" rx="4.200" ry="1.250" fill="#6f6449"/></g>
<g transform="translate(335.1 501.5)"><ellipse rx="7.300" ry="2.850" fill="#cbccc8" stroke="#23407c" stroke-width="1.150"/><ellipse cy=".05" rx="4.200" ry="1.250" fill="#6f6449"/></g>
<g transform="translate(373.3 509.1)"><ellipse rx="7.300" ry="2.850" fill="#cbccc8" stroke="#23407c" stroke-width="1.150"/><ellipse cy=".05" rx="4.200" ry="1.250" fill="#6f6449"/></g>
<g transform="translate(411.6 516.7)"><ellipse rx="7.300" ry="2.850" fill="#cbccc8" stroke="#23407c" stroke-width="1.150"/><ellipse cy=".05" rx="4.200" ry="1.250" fill="#6f6449"/></g>
<g transform="translate(449.8 524.4)"><ellipse rx="7.300" ry="2.850" fill="#cbccc8" stroke="#23407c" stroke-width="1.150"/><ellipse cy=".05" rx="4.200" ry="1.250" fill="#6f6449"/></g>
<g transform="translate(488.1 532.0)"><ellipse rx="7.300" ry="2.850" fill="#cbccc8" stroke="#23407c" stroke-width="1.150"/><ellipse cy=".05" rx="4.200" ry="1.250" fill="#6f6449"/></g>
<g transform="translate(526.3 539.6)"><ellipse rx="7.300" ry="2.850" fill="#cbccc8" stroke="#23407c" stroke-width="1.150"/><ellipse cy=".05" rx="4.200" ry="1.250" fill="#6f6449"/></g>
<g transform="translate(564.6 547.3)"><ellipse rx="7.300" ry="2.850" fill="#cbccc8" stroke="#23407c" stroke-width="1.150"/><ellipse cy=".05" rx="4.200" ry="1.250" fill="#6f6449"/></g>
<g transform="translate(602.8 554.9)"><ellipse rx="7.300" ry="2.850" fill="#cbccc8" stroke="#23407c" stroke-width="1.150"/><ellipse cy=".05" rx="4.200" ry="1.250" fill="#6f6449"/></g>
<g transform="translate(641.1 562.5)"><ellipse rx="7.300" ry="2.850" fill="#cbccc8" stroke="#23407c" stroke-width="1.150"/><ellipse cy=".05" rx="4.200" ry="1.250" fill="#6f6449"/></g>
<g transform="translate(679.3 570.2)"><ellipse rx="7.300" ry="2.850" fill="#cbccc8" stroke="#23407c" stroke-width="1.150"/><ellipse cy=".05" rx="4.200" ry="1.250" fill="#6f6449"/></g>
<g transform="translate(717.6 577.8)"><ellipse rx="7.300" ry="2.850" fill="#cbccc8" stroke="#23407c" stroke-width="1.150"/><ellipse cy=".05" rx="4.200" ry="1.250" fill="#6f6449"/></g>
<g transform="translate(755.8 585.4)"><ellipse rx="7.300" ry="2.850" fill="#cbccc8" stroke="#23407c" stroke-width="1.150"/><ellipse cy=".05" rx="4.200" ry="1.250" fill="#6f6449"/></g>
<g transform="translate(276.8 508.4)"><ellipse rx="7.300" ry="2.850" fill="#cbccc8" stroke="#23407c" stroke-width="1.150"/><ellipse cy=".05" rx="4.200" ry="1.250" fill="#6f6449"/></g>
<g transform="translate(353.3 523.7)"><ellipse rx="7.300" ry="2.850" fill="#cbccc8" stroke="#23407c" stroke-width="1.150"/><ellipse cy=".05" rx="4.200" ry="1.250" fill="#6f6449"/></g>
<g transform="translate(391.6 531.3)"><ellipse rx="7.300" ry="2.850" fill="#cbccc8" stroke="#23407c" stroke-width="1.150"/><ellipse cy=".05" rx="4.200" ry="1.250" fill="#6f6449"/></g>
<g transform="translate(429.8 538.9)"><ellipse rx="7.300" ry="2.850" fill="#cbccc8" stroke="#23407c" stroke-width="1.150"/><ellipse cy=".05" rx="4.200" ry="1.250" fill="#6f6449"/></g>
<g transform="translate(468.1 546.6)"><ellipse rx="7.300" ry="2.850" fill="#cbccc8" stroke="#23407c" stroke-width="1.150"/><ellipse cy=".05" rx="4.200" ry="1.250" fill="#6f6449"/></g>
<g transform="translate(506.3 554.2)"><ellipse rx="7.300" ry="2.850" fill="#cbccc8" stroke="#23407c" stroke-width="1.150"/><ellipse cy=".05" rx="4.200" ry="1.250" fill="#6f6449"/></g>
<g transform="translate(544.6 561.8)"><ellipse rx="7.300" ry="2.850" fill="#cbccc8" stroke="#23407c" stroke-width="1.150"/><ellipse cy=".05" rx="4.200" ry="1.250" fill="#6f6449"/></g>
<g transform="translate(582.8 569.5)"><ellipse rx="7.300" ry="2.850" fill="#cbccc8" stroke="#23407c" stroke-width="1.150"/><ellipse cy=".05" rx="4.200" ry="1.250" fill="#6f6449"/></g>
<g transform="translate(621.1 577.1)"><ellipse rx="7.300" ry="2.850" fill="#cbccc8" stroke="#23407c" stroke-width="1.150"/><ellipse cy=".05" rx="4.200" ry="1.250" fill="#6f6449"/></g>
<g transform="translate(735.8 600.0)"><ellipse rx="7.300" ry="2.850" fill="#cbccc8" stroke="#23407c" stroke-width="1.150"/><ellipse cy=".05" rx="4.200" ry="1.250" fill="#6f6449"/></g>
<defs><linearGradient id="gB" x1="0" y1="0" x2="0" y2="1"><stop offset="0" stop-color="#fff"/><stop offset="1" stop-color="#9db9e6"/></linearGradient><linearGradient id="gA" x1="0" y1="0" x2="1" y2="0"><stop offset="0" stop-color="#f4f7fc"/><stop offset="1" stop-color="#a9c2ea"/></linearGradient></defs>
<path d="M593.5 564Q596 530 625 508" fill="none" stroke="#2a3b5c" stroke-width="1" opacity=".85"/>
<path d="M625 508Q650 492 676 493" fill="none" stroke="#c9d6ee" stroke-width=".8" opacity=".7"/>
<path d="M594 581Q596 615 612 640" fill="none" stroke="#3a3a36" stroke-width=".9" opacity=".85"/>
<path d="M685 493Q703 488 715 506" fill="none" stroke="#d5dcea" stroke-width=".9" opacity=".9"/>
<path d="M675 505Q656 522 650 548" fill="none" stroke="#b8c8e6" stroke-width=".8" opacity=".6"/>
<path d="M644 624Q660 626.500 672 626" fill="none" stroke="#d8d8d4" stroke-width=".8" opacity=".9"/>
<path d="M600 600Q612 618 626 621" fill="none" stroke="#55554f" stroke-width=".7" opacity=".6"/>
<ellipse cx="679.6" cy="498.4" rx="4.700" ry="9.300" fill="#fff" stroke="#1b1b1b" stroke-width="1.500" transform="rotate(12 679.600 498.400)"/><ellipse cx="679.4" cy="498.6" rx="1" ry="1.800" fill="#111"/>
<circle cx="593" cy="572.6" r="7.700" fill="url(#gB)" stroke="#111" stroke-width="1.800"/><circle cx="593.2" cy="572.6" r="1.900" fill="#111"/>
<path d="M678.8 526.500L688.600 541.500H682.400V552H675.200V541.500H669L678.800 526.500z" fill="#f7f7f4" stroke="#111" stroke-width="1.700" stroke-linejoin="miter"/>
<path d="M620.3 578.700L634.600 572L634 577.900L644.600 580.600L643.600 587L632.600 584.800L630.500 590z" fill="url(#gA)" stroke="#111" stroke-width="1.600" stroke-linejoin="miter"/>
<path d="M650 556.300L665.200 558.500V573.400L650 570.200z" fill="#f4f4f0" stroke="#111" stroke-width="1.500"/>
<path d="M665.800 568.600L672.700 563.800V578.200L665.800 583.800z" fill="#ecece8" stroke="#111" stroke-width="1.400"/>
<path d="M636.500 593.700L645.200 589.400L658 591.300L651.300 596.500z" fill="#f2f2ee" stroke="#444" stroke-width=".8"/>
<circle cx="679.6" cy="589.4" r="4.800" fill="url(#gB)" stroke="#1b2438" stroke-width="1.200"/>
<path d="M648.800 613L650.200 601.500L653.500 604L659.500 600L663.300 604.800L657 608.800L660 611.500z" fill="#f4f4f0" stroke="#111" stroke-width="1.400" stroke-linejoin="miter"/>
<ellipse cx="634" cy="622" rx="9.200" ry="3.400" fill="#fafafa" stroke="#1b1b1b" stroke-width="1.300"/><ellipse cx="634.300" cy="622" rx="2.300" ry="1" fill="#111"/>
</svg>
<!--/MODEL-->
<!-- ======= BROWSER ======= -->
<div id="browserhdr"></div>
<!--BROWSER-->
<svg class="abs" style="left:0;top:113px" width="280" height="24" viewBox="0 113 280 24">
<path d="M8.500 121.500v7l-4.500-3.500zM13.500 121.500v7l-4.500-3.500z" fill="#333"/>
<circle cx="264.300" cy="125" r="4.300" fill="#222"/><rect x="261.800" y="124.400" width="5" height="1.200" fill="#fff"/>
</svg>
<div class="t" style="left:23px;top:120px;font-size:10.500px;color:#666;letter-spacing:-.1px">BROWSER</div>
<!-- rows -->
<div class="row" style="left:33px;top:141.500px;width:160px;height:18px"></div>
<div class="abs" style="left:56px;top:143px;width:114px;height:15px;background:#8e8e8e"></div>
<div class="abs" style="left:78.500px;top:143px;width:1px;height:15px;background:#b5b5b5"></div>
<div class="rowt" style="left:87px;top:146px;color:#fff;font-weight:bold;font-size:10px;letter-spacing:0">BatteryPack v1</div>
<div class="row" style="left:50px;top:164px;width:124px;height:18px"></div>
<div class="rowt" style="left:76.500px;top:168px">Document Settings</div>
<div class="row" style="left:50px;top:186.500px;width:102px;height:18px"></div>
<div class="rowt" style="left:80.500px;top:190.500px">Named Views</div>
<div class="row" style="left:50px;top:209px;width:92px;height:18px"></div>
<div class="rowt" style="left:103.500px;top:213px">Origin</div>
<div class="row" style="left:50px;top:231.500px;width:95px;height:18px"></div>
<div class="rowt" style="left:103.500px;top:235.500px">Bodies</div>
<div class="row" style="left:50px;top:254px;width:107px;height:18px"></div>
<div class="rowt" style="left:103.500px;top:258px">Sketches</div>
<svg class="abs" style="left:0;top:140px" width="280" height="140" viewBox="0 140 280 140">
<path d="M22.500 147.500v7h-7z" fill="#222"/>
<g fill="none" stroke="#484848" stroke-width="1"><path d="M34 169.500l5 3.500-5 3.500z"/><path d="M34 192l5 3.500-5 3.500z"/><path d="M34 214.500l5 3.500-5 3.500z"/><path d="M34 237l5 3.500-5 3.500z"/><path d="M34 259.500l5 3.500-5 3.500z"/></g>
<!-- eyes -->
<g id="eye"><path d="M36.500 150.800q6.500-6.500 13 0q-6.500 6.500-13 0z" fill="none" stroke="#8a8a8a" stroke-width="1.300"/><circle cx="43" cy="150.800" r="2.300" fill="#8a8a8a"/></g>
<g transform="translate(17 90)"><path d="M36.500 150.800q6.500-6.500 13 0q-6.500 6.500-13 0z" fill="none" stroke="#8a8a8a" stroke-width="1.300"/><circle cx="43" cy="150.800" r="2.300" fill="#8a8a8a"/></g><g transform="translate(17 112.500)"><path d="M36.500 150.800q6.500-6.500 13 0q-6.500 6.500-13 0z" fill="none" stroke="#8a8a8a" stroke-width="1.300"/><circle cx="43" cy="150.800" r="2.300" fill="#8a8a8a"/></g>
<g opacity=".45"><g transform="translate(17 67.500)"><path d="M36.500 150.800q6.500-6.500 13 0q-6.500 6.500-13 0z" fill="none" stroke="#8a8a8a" stroke-width="1.300"/><circle cx="43" cy="150.800" r="2.300" fill="#8a8a8a"/></g><path d="M55 222l10-7.500" stroke="#8a8a8a" stroke-width="1.200"/></g>
<!-- component icon -->
<path d="M61.500 147l2-2h7.500v8l-2 2.500h-7.500z" fill="#f2f2f2"/><path d="M69 147l2-2v8l-2 2.500z" fill="#cfcfcf"/><path d="M61.500 147h7.500v8.500" fill="none" stroke="#bbb" stroke-width=".6"/>
<!-- radio -->
<circle cx="180.500" cy="150.800" r="5.800" fill="#fff" stroke="#555" stroke-width="1.200"/><circle cx="180.500" cy="150.800" r="2.600" fill="#333"/>
<!-- gear -->
<g transform="translate(58.300 173)" fill="#666"><circle r="4.300"/><g><rect x="-1.400" y="-6.300" width="2.800" height="12.600"/><rect x="-1.400" y="-6.300" width="2.800" height="12.600" transform="rotate(45)"/><rect x="-1.400" y="-6.300" width="2.800" height="12.600" transform="rotate(90)"/><rect x="-1.400" y="-6.300" width="2.800" height="12.600" transform="rotate(135)"/></g><circle r="1.900" fill="#f3f3f3"/></g>
<!-- folders -->
<g id="fold"><path d="M52.500 190h5.500l1.200 1.800h8.300v9.700h-15z" fill="#8e8e8e"/><path d="M52.500 192.600h15" stroke="#a8a8a8" stroke-width=".7"/></g>
<g transform="translate(23.300 22.500)"><path d="M52.500 190h5.500l1.200 1.800h8.300v9.700h-15z" fill="#8e8e8e"/><path d="M52.500 192.600h15" stroke="#a8a8a8" stroke-width=".7"/></g><g transform="translate(23.300 45)"><path d="M52.500 190h5.500l1.200 1.800h8.300v9.700h-15z" fill="#8e8e8e"/><path d="M52.500 192.600h15" stroke="#a8a8a8" stroke-width=".7"/></g><g transform="translate(23.300 67.500)"><path d="M52.500 190h5.500l1.200 1.800h8.300v9.700h-15z" fill="#8e8e8e"/><path d="M52.500 192.600h15" stroke="#a8a8a8" stroke-width=".7"/></g>
<path d="M72.500 246.300h71.500" stroke="#3f86d6" stroke-width="1.600" stroke-dasharray="2.500 2.500"/>
</svg>

<!--/BROWSER-->
<!-- ======= DIALOG ======= -->
<!--VIEWCUBE-->
<svg class="abs" style="left:1190px;top:112px" width="90" height="86" viewBox="1190 112 90 86">
<defs><filter id="vb" x="-30%" y="-30%" width="160%" height="160%"><feGaussianBlur stdDeviation="2.500"/></filter></defs>
<path d="M1214 181l27 7 17-13-7 11-18 5z" fill="#d4d4d4" filter="url(#vb)" opacity=".7"/>
<path d="M1207.200 142l33.700 5.200v36l-32.900-9.600z" fill="#e9e9e9"/>
<path d="M1240.900 147.200l14.900-9.700-.8 32.500-14.100 13.200z" fill="#dddddd"/>
<path d="M1207.200 142l18-7.600 30.600 3.100-14.900 9.700z" fill="#f0f0f0"/>
<g fill="none" stroke="#c2c2c2" stroke-width=".9" stroke-dasharray="2.500 1.800"><path d="M1207.200 142l33.700 5.200v36M1207.200 142l18-7.600 30.600 3.100-14.900 9.700M1207.200 142l.8 31.600 32.900 9.600 14.100-13.200.8-32.500"/></g>
<path d="M1225.500 134.400v-4" stroke="#8fe08f" stroke-width="1.200"/>
<path d="M1253.500 169.200l6 1.700" stroke="#f4a0a0" stroke-width="1.100"/>
<path d="M1210.200 177l-6.500 3" stroke="#9a9af0" stroke-width="1.100"/>
<text x="1221.300" y="132.500" font-family="Liberation Sans, sans-serif" font-size="12" fill="#8fe08f">Y</text>
<text x="1260.800" y="175.300" font-family="Liberation Sans, sans-serif" font-size="9" fill="#f29494">X</text>
<text x="1197.500" y="185" font-family="Liberation Sans, sans-serif" font-size="9" fill="#8c8ce8" font-style="italic">Z</text>
<text transform="matrix(1 .16 0 1 1212.500 164.300)" font-family="Liberation Sans, sans-serif" font-size="7.300" fill="#9c9c9c" font-weight="bold" letter-spacing=".1">FRONT</text>
<text transform="matrix(.5 -.36 0 1 1243.500 165.500)" font-family="Liberation Sans, sans-serif" font-size="7.500" fill="#a2a2a2" font-weight="bold">RIGHT</text>
</svg>

<!--/VIEWCUBE-->
<div id="dlg"></div>
<!--DIALOG-->
<div class="abs" style="left:1043px;top:225px;width:232px;height:1px;background:#d8d8d8"></div>
<div class="abs" style="left:1043px;top:507px;width:232px;height:1px;background:#dcdcdc"></div>
<div class="t" style="left:1065.500px;top:209.500px;font-size:10.500px;color:#666;letter-spacing:-.2px">MOVE/COPY</div>
<div class="lab" style="top:234.9px;left:1054.500px">Move Object</div>
<div class="lab" style="top:262.9px;left:1054.500px">Selection</div>
<div class="lab" style="top:290.9px;left:1054.500px">Move Type</div>
<div class="lab" style="top:318.4px;left:1054.500px">Set Pivot</div>
<div class="lab" style="top:346.9px;left:1054.500px">X Distance</div>
<div class="lab" style="top:374.9px;left:1054.500px">Y Distance</div>
<div class="lab" style="top:402.9px;left:1054.500px">Z Distance</div>
<div class="lab" style="top:430.9px;left:1054.500px">X Angle</div>
<div class="lab" style="top:458.9px;left:1054.500px">Y Angle</div>
<div class="lab" style="top:486.9px;left:1054.500px">Z Angle</div>
<div class="inp" style="left:1125.500px;top:228.500px;height:24.500px;padding-left:21.500px;line-height:22.500px;color:#333">Faces</div>
<div class="abs" style="left:1125.500px;top:256px;width:72px;height:25.500px;background:#1b8fd6"></div>
<div class="t" style="left:1146px;top:263.500px;font-size:10.500px;color:#fff;letter-spacing:-.2px">1 selected</div>
<div class="abs" style="left:1124.800px;top:283.800px;width:21.500px;height:25.200px;background:#1b8fd6"></div>
<div class="inp" style="left:1125.500px;top:341px">0.00 mm</div>
<div class="inp" style="left:1125.500px;top:369px">0.00 mm</div>
<div class="inp" style="left:1125.500px;top:397px">0.00 mm</div>
<div class="inp" style="left:1125.500px;top:425px">0.0 deg</div>
<div class="inp" style="left:1125.500px;top:453px">0.0 deg</div>
<div class="inp" style="left:1125.500px;top:481px">0.0 deg</div>
<div class="abs" style="left:1143px;top:516px;width:56px;height:19px;border:1px solid #cfcfcf;background:#eee;font-size:11px;color:#b8b8b8;text-align:center;line-height:17px">OK</div>
<div class="abs" style="left:1209px;top:516px;width:56px;height:19px;border:1px solid #c8c8c8;background:#eee;font-size:11px;color:#444;text-align:center;line-height:17px;letter-spacing:-.1px">Cancel</div>
<svg class="abs" style="left:1042px;top:203px" width="236" height="340" viewBox="1042 203 236 340">
<circle cx="1057.500" cy="214.800" r="4.300" fill="#222"/><rect x="1055" y="214.200" width="5" height="1.200" fill="#fff"/>
<path d="M1262 211.500l4.500 3.300-4.500 3.300zM1266.500 211.500l4.500 3.300-4.500 3.300z" fill="#222"/>
<!-- faces icon -->
<path d="M1131.500 237.500l7-2.500v9l-7 2.500z" fill="#c9ccd3" stroke="#8a8f9c" stroke-width=".8"/>
<path d="M1235 239.300h5l-2.500 3.200z" fill="#222"/>
<!-- cursor in selection -->
<path d="M1132.800 263.500v10l2.400-2 1.800 3.700 1.600-.8-1.800-3.600h3z" fill="#fff" stroke="#333" stroke-width=".7" stroke-linejoin="round"/>
<path d="M1209 265.700l7 7M1216 265.700l-7 7" stroke="#333" stroke-width="1.500"/>
<!-- move type icons -->
<g stroke="#12263a" stroke-width="1" fill="none"><path d="M1135.200 296.500v-4M1135.200 296.500l-3.500 3.500M1135.200 296.500l4.500.5"/></g><circle cx="1134.800" cy="292" r="1.400" fill="#12263a"/><circle cx="1131.500" cy="300.700" r="1.700" fill="#12263a"/><path d="M1139.200 295.200l2.800 1.800-2.800 1.800z" fill="#12263a"/><circle cx="1135.200" cy="296.500" r="1.300" fill="#12263a"/>
<g stroke="#222" stroke-width="1" fill="none"><path d="M1162.200 296.500v-4.500M1162.200 296.500l-3.500 3.800M1162.200 296.500l4.500.5"/></g><circle cx="1162.200" cy="291.500" r="1.300" fill="#222"/><circle cx="1158.500" cy="300.700" r="1.600" fill="#222"/><path d="M1166.200 295.300l2.800 1.800-2.800 1.800z" fill="#222"/>
<path d="M1193.300 293.800a4.300 4.300 0 1 0 1 3.700" fill="none" stroke="#333" stroke-width="1.100"/><path d="M1191.500 291.500l3.500.5-1.500 3z" fill="#333"/>
<path d="M1212 301.500l10-10" stroke="#333" stroke-width="1" stroke-dasharray="2 1.300"/><rect x="1210.700" y="300.500" width="2.400" height="2.400" fill="#bbb" stroke="#888" stroke-width=".5"/><circle cx="1215.300" cy="298.500" r="1.700" fill="#222"/><rect x="1221" y="290.200" width="2.400" height="2.400" fill="#ddd" stroke="#888" stroke-width=".5"/>
<path d="M1238 302.500l5-5" stroke="#4a8fd0" stroke-width="1.100"/><path d="M1243 297.500l6-6" stroke="#c55" stroke-width="1" stroke-dasharray="2 1.300"/><circle cx="1242.500" cy="300.800" r="1.100" fill="#e05a5a"/><circle cx="1239.800" cy="298" r="1.100" fill="#5ab05a"/><circle cx="1243.800" cy="297" r="1.700" fill="#222"/><rect x="1248.400" y="290.200" width="2.400" height="2.400" fill="#ddd" stroke="#888" stroke-width=".5"/>
<!-- set pivot -->
<path d="M1129.800 318.500v11.500" stroke="#7a86c8" stroke-width="1"/><path d="M1129.800 330h11.500" stroke="#e07a7a" stroke-width="1.100"/><path d="M1130.800 329l6.800-6.500" stroke="#6ab06a" stroke-width="1"/>
<path d="M1138.600 317.300l1.500 2h-3zM1138.600 324.700l1.500-2h-3zM1134.900 321l2-1.500v3zM1142.300 321l-2-1.500v3z" fill="#222"/><circle cx="1138.600" cy="321" r=".9" fill="#222"/>
<!-- info -->
<circle cx="1055.600" cy="525" r="5" fill="#111"/><rect x="1054.800" y="524.200" width="1.700" height="3.600" fill="#fff"/><circle cx="1055.650" cy="522.400" r=".95" fill="#fff"/>
</svg>

<!--/DIALOG-->
<!-- ======= BOTTOM ======= -->
<div id="commentshdr"></div>
<!--NAVBAR-->
<div class="t" style="left:22.500px;top:934.800px;font-size:10.500px;color:#666;letter-spacing:-.1px">COMMENTS</div>
<svg class="abs" style="left:255px;top:930px" width="20" height="20" viewBox="255 930 20 20"><circle cx="264.400" cy="940.500" r="4.300" fill="#222"/><path d="M261.900 940.500h5M264.400 938v5" stroke="#fff" stroke-width="1.200"/></svg>
<div class="abs" style="left:527px;top:928px;width:221px;height:22px;background:#efefef"></div>
<div class="t" style="left:1090px;top:935.500px;font-size:10.500px;color:#222;font-weight:bold;letter-spacing:-.15px">1 Face | Area : 7491.168 mm^2</div>
<svg class="abs" style="left:527px;top:926px" width="750" height="28" viewBox="527 926 750 28"><g fill="none" stroke="#555" stroke-width="1"><ellipse cx="537.500" cy="939" rx="2.200" ry="6.300"/><ellipse cx="537.500" cy="939.500" rx="6.300" ry="2.200"/></g><path d="M537.500 931.500v15" stroke="#555" stroke-width=".7"/><circle cx="531.500" cy="939" r="1" fill="#444"/><path d="M549.5 937.800h5l-2.500 3.300z" fill="#222"/><rect x="561.500" y="934.500" width="12.500" height="9.500" fill="#d8d8d8" stroke="#444" stroke-width="1"/><path d="M561.500 937.500h12.500M563 940h9.500M563 942h9.500" stroke="#555" stroke-width=".8"/><path d="M564.500 934.500v-2.500h6.500v2.500" fill="none" stroke="#444" stroke-width="1"/><path d="M589.500 939.500v-5.500q0-1 1-1t1 1v-1.500q0-1 1-1t1 1v1q0-1 1-1t1 1v1.500q0-1 1-1t1 1v7q0 5-4.500 5.500h-1.500q-2.500-.500-4-3.500l-2-3.500q0-1.500 1.500-1t2.500 2.500z" fill="#fff" stroke="#444" stroke-width="1"/><circle cx="614.500" cy="936.800" r="4.600" fill="#f6f6f6" stroke="#555" stroke-width="1"/><path d="M618 940.300l4.500 4.500" stroke="#444" stroke-width="1.900"/><path d="M621 931.500v4M619 933.500h4" stroke="#444" stroke-width=".9"/><rect x="634" y="931.500" width="11" height="13" fill="none" stroke="#777" stroke-width=".8" stroke-dasharray="1.500 1"/><circle cx="639.500" cy="937.500" r="4.600" fill="#f6f6f6" stroke="#555" stroke-width="1"/><path d="M643 941l4.500 4.500" stroke="#444" stroke-width="1.900"/><path d="M653.2 937.800h5l-2.500 3.300z" fill="#222"/><rect x="666" y="931.500" width="13.500" height="10.500" fill="#7ea9df" stroke="#777" stroke-width="1"/><rect x="667.500" y="933" width="10.500" height="7.500" fill="#8db6e8"/><path d="M669.500 944.500h6l.8 2h-7.600z" fill="#777"/><rect x="671.500" y="941.500" width="2" height="3" fill="#888"/><path d="M681.8 937.800h5l-2.500 3.300z" fill="#222"/><rect x="694.500" y="932.500" width="13" height="12.500" fill="#d4d4d4" stroke="#666" stroke-width="1"/><path d="M697.700 932.500v12.500M701 932.500v12.500M704.200 932.500v12.500M694.500 935.600h13M694.500 938.700h13M694.500 941.800h13" stroke="#8a8a8a" stroke-width=".8"/><path d="M710.3 937.800h5l-2.500 3.300z" fill="#222"/><rect x="723.500" y="932.500" width="13" height="12.500" fill="#86aadf" stroke="#34507c" stroke-width="1"/><path d="M730 932.500v12.500M723.500 938.700h13" stroke="#34507c" stroke-width="1"/><path d="M739.2 937.800h5l-2.500 3.300z" fill="#222"/><path d="M1253 941q0-8 8-8h3q4 0 4 4v8q0 4-4 4h-7q-4 0-4-4z" fill="#151515"/><path d="M1256.500 943.500q2-5 8-5.500l-2 1.500q2 0 2 2-3-1-8 2z" fill="#e8e8e8"/></svg>
<!--/NAVBAR-->
<div id="timeline"></div>
<!--TIMELINE-->
<div class="abs" style="left:0;top:957.500px;width:125px;height:5.500px;background:#cfcfcf;border-radius:0 2px 2px 0"></div>
<div class="abs" style="left:443px;top:967px;width:111.500px;height:22.500px;background:#e3e31d"></div>
<div class="abs" style="left:712px;top:967px;width:22px;height:22.500px;background:#e3e31d"></div>
<svg class="abs" style="left:0;top:957px" width="1280" height="45" viewBox="0 957 1280 45"><defs>
<g id="tE"><path d="M-6 -4.300h10.500v11.300h-10.500z" fill="#4fa1e4"/><path d="M-6 -4.300l2.500-2.400h10.500l-2.500 2.400z" fill="#86c4f3"/><path d="M4.500 -4.300l2.500-2.400v10.200l-2.500 3.500z" fill="#2f7fc8"/><path d="M-6 7h10.500l2.500-3.500v1.500l-2.500 3.500h-10.500z" fill="#c5c5c5"/><path d="M7.300 5.500v-10" stroke="#333" stroke-width=".8"/><path d="M6 -4l1.300-2.700 1.300 2.700z" fill="#333"/></g>
<g id="tS"><rect x="-7" y="-7" width="13.500" height="13.500" fill="#f6f6f6" stroke="#5d6c8c" stroke-width=".8"/><rect x="-4.300" y="-4" width="8" height="8" fill="none" stroke="#7a8499" stroke-width=".8" stroke-dasharray="1.600 1"/><path d="M-4.300 -4h8M-4.300 -4v8Q2.500 3 3.700 -4" fill="none" stroke="#5a5f6a" stroke-width=".8"/><path d="M1 6.300l4.300-4.300 1.800 1.800-4.300 4.300-2.300.5z" fill="#f0a52a"/><path d="M5.300 2l1.100-1.100 1.800 1.800-1.100 1.100z" fill="#e0473a"/></g>
<g id="tH"><path d="M5 -4.500l3-2.500v10l-3 3.500z" fill="#3b88cf"/><path d="M-7.400 -4.500l3-2.500h12.400l-3 2.500z" fill="#8ccaf5"/><rect x="-7.400" y="-4.500" width="12.400" height="11.500" fill="#e6e6e6" stroke="#858585" stroke-width="1"/><rect x="-4.600" y="-1.800" width="6.800" height="6.300" fill="#fdfdfd" stroke="#9c9c9c" stroke-width=".7"/></g>
<g id="tF"><path d="M-7.500 -3l3-4.500h4Q8 -6.500 8 2v2l-2.500 3.500h-13z" fill="#d2d2d2" stroke="#959595" stroke-width=".8"/><path d="M-1.500 -5.800l2-1.700Q8 -6.500 8 2l-3 1.800Q4.500 -3.800 -1.500 -5.800z" fill="#54a4e6"/></g>
</defs><path d="M139 993.500H1231" stroke="#bdbdbd" stroke-width="1"/><g transform="translate(139.0 978.500)"><rect x="-7" y="-7" width="13.500" height="13.500" fill="#f6f6f6" stroke="#5d6c8c" stroke-width=".8"/><rect x="-4.300" y="-4" width="8" height="8" fill="none" stroke="#7a8499" stroke-width=".8" stroke-dasharray="1.600 1"/><path d="M-4.300 -4h8M-4.300 -4v8Q2.500 3 3.700 -4" fill="none" stroke="#5a5f6a" stroke-width=".8"/><path d="M1 6.300l4.300-4.300 1.800 1.800-4.300 4.300-2.300.5z" fill="#f0a52a"/><path d="M5.300 2l1.100-1.100 1.800 1.800-1.100 1.100z" fill="#e0473a"/></g><path d="M139.0 988.500v5" stroke="#ababab" stroke-width="1"/><g transform="translate(161.4 978.500)"><path d="M-6 -4.300h10.500v11.300h-10.500z" fill="#4fa1e4"/><path d="M-6 -4.300l2.500-2.400h10.500l-2.500 2.400z" fill="#86c4f3"/><path d="M4.500 -4.300l2.500-2.400v10.200l-2.500 3.500z" fill="#2f7fc8"/><path d="M-6 7h10.500l2.500-3.500v1.500l-2.500 3.500h-10.500z" fill="#c5c5c5"/><path d="M7.300 5.500v-10" stroke="#333" stroke-width=".8"/><path d="M6 -4l1.300-2.700 1.300 2.700z" fill="#333"/></g><path d="M161.4 988.500v5" stroke="#ababab" stroke-width="1"/><g transform="translate(183.9 978.500)"><path d="M-6 -4.300h10.500v11.300h-10.500z" fill="#4fa1e4"/><path d="M-6 -4.300l2.500-2.400h10.500l-2.500 2.400z" fill="#86c4f3"/><path d="M4.500 -4.300l2.500-2.400v10.200l-2.500 3.500z" fill="#2f7fc8"/><path d="M-6 7h10.500l2.500-3.500v1.500l-2.500 3.500h-10.500z" fill="#c5c5c5"/><path d="M7.300 5.500v-10" stroke="#333" stroke-width=".8"/><path d="M6 -4l1.300-2.700 1.300 2.700z" fill="#333"/></g><path d="M183.9 988.500v5" stroke="#ababab" stroke-width="1"/><g transform="translate(206.3 978.500)"><rect x="-7" y="-7" width="13.500" height="13.500" fill="#f6f6f6" stroke="#5d6c8c" stroke-width=".8"/><rect x="-4.300" y="-4" width="8" height="8" fill="none" stroke="#7a8499" stroke-width=".8" stroke-dasharray="1.600 1"/><path d="M-4.300 -4h8M-4.300 -4v8Q2.500 3 3.700 -4" fill="none" stroke="#5a5f6a" stroke-width=".8"/><path d="M1 6.300l4.300-4.300 1.800 1.800-4.300 4.300-2.300.5z" fill="#f0a52a"/><path d="M5.300 2l1.100-1.100 1.800 1.800-1.100 1.100z" fill="#e0473a"/></g><path d="M206.3 988.500v5" stroke="#ababab" stroke-width="1"/><g transform="translate(228.7 978.500)"><rect x="-7" y="-7" width="13.500" height="13.500" fill="#f6f6f6" stroke="#5d6c8c" stroke-width=".8"/><rect x="-4.300" y="-4" width="8" height="8" fill="none" stroke="#7a8499" stroke-width=".8" stroke-dasharray="1.600 1"/><path d="M-4.300 -4h8M-4.300 -4v8Q2.500 3 3.700 -4" fill="none" stroke="#5a5f6a" stroke-width=".8"/><path d="M1 6.300l4.300-4.300 1.800 1.800-4.300 4.300-2.300.5z" fill="#f0a52a"/><path d="M5.300 2l1.100-1.100 1.800 1.800-1.100 1.100z" fill="#e0473a"/></g><path d="M228.7 988.500v5" stroke="#ababab" stroke-width="1"/><g transform="translate(251.2 978.500)"><path d="M-6 -4.300h10.500v11.300h-10.500z" fill="#4fa1e4"/><path d="M-6 -4.300l2.500-2.400h10.500l-2.500 2.400z" fill="#86c4f3"/><path d="M4.500 -4.300l2.500-2.400v10.200l-2.500 3.500z" fill="#2f7fc8"/><path d="M-6 7h10.500l2.500-3.500v1.500l-2.500 3.500h-10.500z" fill="#c5c5c5"/><path d="M7.300 5.500v-10" stroke="#333" stroke-width=".8"/><path d="M6 -4l1.300-2.700 1.300 2.700z" fill="#333"/></g><path d="M251.2 988.500v5" stroke="#ababab" stroke-width="1"/><g transform="translate(273.6 978.500)"><path d="M-6 -4.300h10.500v11.300h-10.500z" fill="#4fa1e4"/><path d="M-6 -4.300l2.500-2.400h10.500l-2.500 2.400z" fill="#86c4f3"/><path d="M4.500 -4.300l2.500-2.400v10.200l-2.500 3.500z" fill="#2f7fc8"/><path d="M-6 7h10.500l2.500-3.500v1.500l-2.500 3.500h-10.500z" fill="#c5c5c5"/><path d="M7.300 5.500v-10" stroke="#333" stroke-width=".8"/><path d="M6 -4l1.300-2.700 1.300 2.700z" fill="#333"/></g><path d="M273.6 988.500v5" stroke="#ababab" stroke-width="1"/><g transform="translate(296.0 978.500)"><rect x="-7" y="-7" width="13.500" height="13.500" fill="#f6f6f6" stroke="#5d6c8c" stroke-width=".8"/><rect x="-4.300" y="-4" width="8" height="8" fill="none" stroke="#7a8499" stroke-width=".8" stroke-dasharray="1.600 1"/><path d="M-4.300 -4h8M-4.300 -4v8Q2.500 3 3.700 -4" fill="none" stroke="#5a5f6a" stroke-width=".8"/><path d="M1 6.300l4.300-4.300 1.800 1.800-4.300 4.300-2.300.5z" fill="#f0a52a"/><path d="M5.300 2l1.100-1.100 1.800 1.800-1.100 1.100z" fill="#e0473a"/></g><path d="M296.0 988.500v5" stroke="#ababab" stroke-width="1"/><g transform="translate(318.5 978.500)"><path d="M-6 -4.300h10.500v11.300h-10.500z" fill="#4fa1e4"/><path d="M-6 -4.300l2.500-2.400h10.500l-2.500 2.400z" fill="#86c4f3"/><path d="M4.500 -4.300l2.500-2.400v10.200l-2.500 3.500z" fill="#2f7fc8"/><path d="M-6 7h10.500l2.500-3.500v1.500l-2.500 3.500h-10.500z" fill="#c5c5c5"/><path d="M7.300 5.500v-10" stroke="#333" stroke-width=".8"/><path d="M6 -4l1.300-2.700 1.300 2.700z" fill="#333"/></g><path d="M318.5 988.500v5" stroke="#ababab" stroke-width="1"/><g transform="translate(340.9 978.500)"><path d="M-6 -4.300h10.500v11.300h-10.500z" fill="#4fa1e4"/><path d="M-6 -4.300l2.500-2.400h10.500l-2.500 2.400z" fill="#86c4f3"/><path d="M4.500 -4.300l2.500-2.400v10.200l-2.500 3.500z" fill="#2f7fc8"/><path d="M-6 7h10.500l2.500-3.500v1.500l-2.500 3.500h-10.500z" fill="#c5c5c5"/><path d="M7.300 5.500v-10" stroke="#333" stroke-width=".8"/><path d="M6 -4l1.300-2.700 1.300 2.700z" fill="#333"/></g><path d="M340.9 988.500v5" stroke="#ababab" stroke-width="1"/><g transform="translate(363.3 978.500)"><path d="M-6 -4.300h10.500v11.300h-10.500z" fill="#4fa1e4"/><path d="M-6 -4.300l2.500-2.400h10.500l-2.500 2.400z" fill="#86c4f3"/><path d="M4.500 -4.300l2.500-2.400v10.200l-2.500 3.500z" fill="#2f7fc8"/><path d="M-6 7h10.500l2.500-3.500v1.500l-2.500 3.500h-10.500z" fill="#c5c5c5"/><path d="M7.300 5.500v-10" stroke="#333" stroke-width=".8"/><path d="M6 -4l1.300-2.700 1.300 2.700z" fill="#333"/></g><path d="M363.3 988.500v5" stroke="#ababab" stroke-width="1"/><g transform="translate(385.8 978.500)"><path d="M-6 -4.300h10.500v11.300h-10.500z" fill="#4fa1e4"/><path d="M-6 -4.300l2.500-2.400h10.500l-2.500 2.400z" fill="#86c4f3"/><path d="M4.500 -4.300l2.500-2.400v10.200l-2.500 3.500z" fill="#2f7fc8"/><path d="M-6 7h10.500l2.500-3.500v1.500l-2.500 3.500h-10.500z" fill="#c5c5c5"/><path d="M7.300 5.500v-10" stroke="#333" stroke-width=".8"/><path d="M6 -4l1.300-2.700 1.300 2.700z" fill="#333"/></g><path d="M385.8 988.500v5" stroke="#ababab" stroke-width="1"/><g transform="translate(408.2 978.500)"><path d="M-6 -4.300h10.500v11.300h-10.500z" fill="#4fa1e4"/><path d="M-6 -4.300l2.500-2.400h10.500l-2.500 2.400z" fill="#86c4f3"/><path d="M4.500 -4.300l2.500-2.400v10.200l-2.500 3.500z" fill="#2f7fc8"/><path d="M-6 7h10.500l2.500-3.500v1.500l-2.500 3.500h-10.500z" fill="#c5c5c5"/><path d="M7.300 5.500v-10" stroke="#333" stroke-width=".8"/><path d="M6 -4l1.300-2.700 1.300 2.700z" fill="#333"/></g><path d="M408.2 988.500v5" stroke="#ababab" stroke-width="1"/><g transform="translate(430.6 978.500)"><path d="M-6 -4.300h10.500v11.300h-10.500z" fill="#4fa1e4"/><path d="M-6 -4.300l2.500-2.400h10.500l-2.500 2.400z" fill="#86c4f3"/><path d="M4.500 -4.300l2.500-2.400v10.200l-2.500 3.500z" fill="#2f7fc8"/><path d="M-6 7h10.500l2.500-3.500v1.500l-2.500 3.500h-10.500z" fill="#c5c5c5"/><path d="M7.300 5.500v-10" stroke="#333" stroke-width=".8"/><path d="M6 -4l1.300-2.700 1.300 2.700z" fill="#333"/></g><path d="M430.6 988.500v5" stroke="#ababab" stroke-width="1"/><g transform="translate(453.1 978.500)"><path d="M-6 -4.300h10.500v11.300h-10.500z" fill="#4fa1e4"/><path d="M-6 -4.300l2.500-2.400h10.500l-2.500 2.400z" fill="#86c4f3"/><path d="M4.500 -4.300l2.500-2.400v10.200l-2.500 3.500z" fill="#2f7fc8"/><path d="M-6 7h10.500l2.500-3.500v1.500l-2.500 3.500h-10.500z" fill="#c5c5c5"/><path d="M7.300 5.500v-10" stroke="#333" stroke-width=".8"/><path d="M6 -4l1.300-2.700 1.300 2.700z" fill="#333"/></g><path d="M453.1 988.500v5" stroke="#ababab" stroke-width="1"/><g transform="translate(475.5 978.500)"><path d="M-6 -4.300h10.500v11.300h-10.500z" fill="#4fa1e4"/><path d="M-6 -4.300l2.500-2.400h10.500l-2.500 2.400z" fill="#86c4f3"/><path d="M4.500 -4.300l2.500-2.400v10.200l-2.500 3.500z" fill="#2f7fc8"/><path d="M-6 7h10.500l2.500-3.500v1.500l-2.500 3.500h-10.500z" fill="#c5c5c5"/><path d="M7.300 5.500v-10" stroke="#333" stroke-width=".8"/><path d="M6 -4l1.300-2.700 1.300 2.700z" fill="#333"/></g><path d="M475.5 988.500v5" stroke="#ababab" stroke-width="1"/><g transform="translate(497.9 978.500)"><path d="M-6 -4.300h10.500v11.300h-10.500z" fill="#4fa1e4"/><path d="M-6 -4.300l2.500-2.400h10.500l-2.500 2.400z" fill="#86c4f3"/><path d="M4.500 -4.300l2.500-2.400v10.200l-2.500 3.500z" fill="#2f7fc8"/><path d="M-6 7h10.500l2.500-3.500v1.500l-2.500 3.500h-10.500z" fill="#c5c5c5"/><path d="M7.300 5.500v-10" stroke="#333" stroke-width=".8"/><path d="M6 -4l1.300-2.700 1.300 2.700z" fill="#333"/></g><path d="M497.9 988.500v5" stroke="#ababab" stroke-width="1"/><g transform="translate(520.4 978.500)"><path d="M-6 -4.300h10.500v11.300h-10.500z" fill="#4fa1e4"/><path d="M-6 -4.300l2.500-2.400h10.500l-2.500 2.400z" fill="#86c4f3"/><path d="M4.500 -4.300l2.500-2.400v10.200l-2.500 3.500z" fill="#2f7fc8"/><path d="M-6 7h10.500l2.500-3.500v1.500l-2.500 3.500h-10.500z" fill="#c5c5c5"/><path d="M7.300 5.500v-10" stroke="#333" stroke-width=".8"/><path d="M6 -4l1.300-2.700 1.300 2.700z" fill="#333"/></g><path d="M520.4 988.500v5" stroke="#ababab" stroke-width="1"/><g transform="translate(542.8 978.500)"><path d="M-6 -4.300h10.500v11.300h-10.500z" fill="#4fa1e4"/><path d="M-6 -4.300l2.500-2.400h10.500l-2.500 2.400z" fill="#86c4f3"/><path d="M4.500 -4.300l2.500-2.400v10.200l-2.500 3.500z" fill="#2f7fc8"/><path d="M-6 7h10.500l2.500-3.500v1.500l-2.500 3.500h-10.500z" fill="#c5c5c5"/><path d="M7.300 5.500v-10" stroke="#333" stroke-width=".8"/><path d="M6 -4l1.300-2.700 1.300 2.700z" fill="#333"/></g><path d="M542.8 988.500v5" stroke="#ababab" stroke-width="1"/><g transform="translate(565.2 978.500)"><path d="M5 -4.500l3-2.500v10l-3 3.500z" fill="#3b88cf"/><path d="M-7.400 -4.500l3-2.500h12.400l-3 2.500z" fill="#8ccaf5"/><rect x="-7.400" y="-4.500" width="12.400" height="11.500" fill="#e6e6e6" stroke="#858585" stroke-width="1"/><rect x="-4.600" y="-1.800" width="6.800" height="6.300" fill="#fdfdfd" stroke="#9c9c9c" stroke-width=".7"/></g><path d="M565.2 988.500v5" stroke="#ababab" stroke-width="1"/><g transform="translate(587.7 978.500)"><path d="M5 -4.500l3-2.500v10l-3 3.500z" fill="#3b88cf"/><path d="M-7.400 -4.500l3-2.500h12.400l-3 2.500z" fill="#8ccaf5"/><rect x="-7.400" y="-4.500" width="12.400" height="11.500" fill="#e6e6e6" stroke="#858585" stroke-width="1"/><rect x="-4.600" y="-1.800" width="6.800" height="6.300" fill="#fdfdfd" stroke="#9c9c9c" stroke-width=".7"/></g><path d="M587.7 988.500v5" stroke="#ababab" stroke-width="1"/><g transform="translate(610.1 978.500)"><path d="M5 -4.500l3-2.500v10l-3 3.500z" fill="#3b88cf"/><path d="M-7.400 -4.500l3-2.500h12.400l-3 2.500z" fill="#8ccaf5"/><rect x="-7.400" y="-4.500" width="12.400" height="11.500" fill="#e6e6e6" stroke="#858585" stroke-width="1"/><rect x="-4.600" y="-1.800" width="6.800" height="6.300" fill="#fdfdfd" stroke="#9c9c9c" stroke-width=".7"/></g><path d="M610.1 988.500v5" stroke="#ababab" stroke-width="1"/><g transform="translate(632.5 978.500)"><path d="M5 -4.500l3-2.500v10l-3 3.500z" fill="#3b88cf"/><path d="M-7.400 -4.500l3-2.500h12.400l-3 2.500z" fill="#8ccaf5"/><rect x="-7.400" y="-4.500" width="12.400" height="11.500" fill="#e6e6e6" stroke="#858585" stroke-width="1"/><rect x="-4.600" y="-1.800" width="6.800" height="6.300" fill="#fdfdfd" stroke="#9c9c9c" stroke-width=".7"/></g><path d="M632.5 988.500v5" stroke="#ababab" stroke-width="1"/><g transform="translate(655.0 978.500)"><rect x="-7" y="-7" width="13.500" height="13.500" fill="#f6f6f6" stroke="#5d6c8c" stroke-width=".8"/><rect x="-4.300" y="-4" width="8" height="8" fill="none" stroke="#7a8499" stroke-width=".8" stroke-dasharray="1.600 1"/><path d="M-4.300 -4h8M-4.300 -4v8Q2.500 3 3.700 -4" fill="none" stroke="#5a5f6a" stroke-width=".8"/><path d="M1 6.300l4.300-4.300 1.800 1.800-4.300 4.300-2.300.5z" fill="#f0a52a"/><path d="M5.300 2l1.100-1.100 1.800 1.800-1.100 1.100z" fill="#e0473a"/></g><path d="M655.0 988.500v5" stroke="#ababab" stroke-width="1"/><g transform="translate(677.4 978.500)"><path d="M-6 -4.300h10.500v11.300h-10.500z" fill="#4fa1e4"/><path d="M-6 -4.300l2.500-2.400h10.500l-2.500 2.400z" fill="#86c4f3"/><path d="M4.500 -4.300l2.500-2.400v10.200l-2.500 3.500z" fill="#2f7fc8"/><path d="M-6 7h10.500l2.500-3.500v1.500l-2.500 3.500h-10.500z" fill="#c5c5c5"/><path d="M7.300 5.500v-10" stroke="#333" stroke-width=".8"/><path d="M6 -4l1.300-2.700 1.300 2.700z" fill="#333"/></g><path d="M677.4 988.500v5" stroke="#ababab" stroke-width="1"/><g transform="translate(699.9 978.500)"><path d="M5 -4.500l3-2.500v10l-3 3.500z" fill="#3b88cf"/><path d="M-7.400 -4.500l3-2.500h12.400l-3 2.500z" fill="#8ccaf5"/><rect x="-7.400" y="-4.500" width="12.400" height="11.500" fill="#e6e6e6" stroke="#858585" stroke-width="1"/><rect x="-4.600" y="-1.800" width="6.800" height="6.300" fill="#fdfdfd" stroke="#9c9c9c" stroke-width=".7"/></g><path d="M699.9 988.500v5" stroke="#ababab" stroke-width="1"/><g transform="translate(722.3 978.500)"><path d="M-6 -4.300h10.500v11.300h-10.500z" fill="#4fa1e4"/><path d="M-6 -4.300l2.500-2.400h10.500l-2.500 2.400z" fill="#86c4f3"/><path d="M4.500 -4.300l2.500-2.400v10.200l-2.500 3.500z" fill="#2f7fc8"/><path d="M-6 7h10.500l2.500-3.500v1.500l-2.500 3.500h-10.500z" fill="#c5c5c5"/><path d="M7.300 5.500v-10" stroke="#333" stroke-width=".8"/><path d="M6 -4l1.300-2.700 1.300 2.700z" fill="#333"/></g><path d="M722.3 988.500v5" stroke="#ababab" stroke-width="1"/><g transform="translate(744.7 978.500)"><path d="M-6 -4.300h10.500v11.300h-10.500z" fill="#4fa1e4"/><path d="M-6 -4.300l2.500-2.400h10.500l-2.500 2.400z" fill="#86c4f3"/><path d="M4.500 -4.300l2.500-2.400v10.200l-2.500 3.500z" fill="#2f7fc8"/><path d="M-6 7h10.500l2.500-3.500v1.500l-2.500 3.500h-10.500z" fill="#c5c5c5"/><path d="M7.300 5.500v-10" stroke="#333" stroke-width=".8"/><path d="M6 -4l1.300-2.700 1.300 2.700z" fill="#333"/></g><path d="M744.7 988.500v5" stroke="#ababab" stroke-width="1"/><g transform="translate(767.2 978.500)"><path d="M-6 -4.300h10.500v11.300h-10.500z" fill="#4fa1e4"/><path d="M-6 -4.300l2.500-2.400h10.500l-2.500 2.400z" fill="#86c4f3"/><path d="M4.500 -4.300l2.500-2.400v10.200l-2.500 3.500z" fill="#2f7fc8"/><path d="M-6 7h10.500l2.500-3.500v1.500l-2.500 3.500h-10.500z" fill="#c5c5c5"/><path d="M7.300 5.500v-10" stroke="#333" stroke-width=".8"/><path d="M6 -4l1.300-2.700 1.300 2.700z" fill="#333"/></g><path d="M767.2 988.500v5" stroke="#ababab" stroke-width="1"/><g transform="translate(789.6 978.500)"><path d="M-6 -4.300h10.500v11.300h-10.500z" fill="#4fa1e4"/><path d="M-6 -4.300l2.500-2.400h10.500l-2.500 2.400z" fill="#86c4f3"/><path d="M4.500 -4.300l2.500-2.400v10.200l-2.500 3.500z" fill="#2f7fc8"/><path d="M-6 7h10.500l2.500-3.500v1.500l-2.500 3.500h-10.500z" fill="#c5c5c5"/><path d="M7.300 5.500v-10" stroke="#333" stroke-width=".8"/><path d="M6 -4l1.300-2.700 1.300 2.700z" fill="#333"/></g><path d="M789.6 988.500v5" stroke="#ababab" stroke-width="1"/><g transform="translate(812.0 978.500)"><path d="M-6 -4.300h10.500v11.300h-10.500z" fill="#4fa1e4"/><path d="M-6 -4.300l2.500-2.400h10.500l-2.500 2.400z" fill="#86c4f3"/><path d="M4.500 -4.300l2.500-2.400v10.200l-2.500 3.500z" fill="#2f7fc8"/><path d="M-6 7h10.500l2.500-3.500v1.500l-2.500 3.500h-10.500z" fill="#c5c5c5"/><path d="M7.300 5.500v-10" stroke="#333" stroke-width=".8"/><path d="M6 -4l1.300-2.700 1.300 2.700z" fill="#333"/></g><path d="M812.0 988.500v5" stroke="#ababab" stroke-width="1"/><g transform="translate(834.5 978.500)"><path d="M-6 -4.300h10.500v11.300h-10.500z" fill="#4fa1e4"/><path d="M-6 -4.300l2.500-2.400h10.500l-2.500 2.400z" fill="#86c4f3"/><path d="M4.500 -4.300l2.500-2.400v10.200l-2.500 3.500z" fill="#2f7fc8"/><path d="M-6 7h10.500l2.500-3.500v1.500l-2.500 3.500h-10.500z" fill="#c5c5c5"/><path d="M7.300 5.500v-10" stroke="#333" stroke-width=".8"/><path d="M6 -4l1.300-2.700 1.300 2.700z" fill="#333"/></g><path d="M834.5 988.500v5" stroke="#ababab" stroke-width="1"/><g transform="translate(856.9 978.500)"><path d="M-6 -4.300h10.500v11.300h-10.500z" fill="#4fa1e4"/><path d="M-6 -4.300l2.500-2.400h10.500l-2.500 2.400z" fill="#86c4f3"/><path d="M4.500 -4.300l2.500-2.400v10.200l-2.500 3.500z" fill="#2f7fc8"/><path d="M-6 7h10.500l2.500-3.500v1.500l-2.500 3.500h-10.500z" fill="#c5c5c5"/><path d="M7.300 5.500v-10" stroke="#333" stroke-width=".8"/><path d="M6 -4l1.300-2.700 1.300 2.700z" fill="#333"/></g><path d="M856.9 988.500v5" stroke="#ababab" stroke-width="1"/><g transform="translate(879.3 978.500)"><rect x="-7" y="-7" width="13.500" height="13.500" fill="#f6f6f6" stroke="#5d6c8c" stroke-width=".8"/><rect x="-4.300" y="-4" width="8" height="8" fill="none" stroke="#7a8499" stroke-width=".8" stroke-dasharray="1.600 1"/><path d="M-4.300 -4h8M-4.300 -4v8Q2.500 3 3.700 -4" fill="none" stroke="#5a5f6a" stroke-width=".8"/><path d="M1 6.300l4.300-4.300 1.800 1.800-4.300 4.300-2.300.5z" fill="#f0a52a"/><path d="M5.300 2l1.100-1.100 1.800 1.800-1.100 1.100z" fill="#e0473a"/></g><path d="M879.3 988.500v5" stroke="#ababab" stroke-width="1"/><g transform="translate(901.8 978.500)"><path d="M-6 -4.300h10.500v11.300h-10.500z" fill="#4fa1e4"/><path d="M-6 -4.300l2.500-2.400h10.500l-2.500 2.400z" fill="#86c4f3"/><path d="M4.500 -4.300l2.500-2.400v10.200l-2.500 3.500z" fill="#2f7fc8"/><path d="M-6 7h10.500l2.500-3.500v1.500l-2.500 3.500h-10.500z" fill="#c5c5c5"/><path d="M7.300 5.500v-10" stroke="#333" stroke-width=".8"/><path d="M6 -4l1.300-2.700 1.300 2.700z" fill="#333"/></g><path d="M901.8 988.500v5" stroke="#ababab" stroke-width="1"/><g transform="translate(924.2 978.500)"><rect x="-7" y="-7" width="13.500" height="13.500" fill="#f6f6f6" stroke="#5d6c8c" stroke-width=".8"/><rect x="-4.300" y="-4" width="8" height="8" fill="none" stroke="#7a8499" stroke-width=".8" stroke-dasharray="1.600 1"/><path d="M-4.300 -4h8M-4.300 -4v8Q2.500 3 3.700 -4" fill="none" stroke="#5a5f6a" stroke-width=".8"/><path d="M1 6.300l4.300-4.300 1.800 1.800-4.300 4.300-2.300.5z" fill="#f0a52a"/><path d="M5.300 2l1.100-1.100 1.800 1.800-1.100 1.100z" fill="#e0473a"/></g><path d="M924.2 988.500v5" stroke="#ababab" stroke-width="1"/><g transform="translate(946.6 978.500)"><rect x="-7" y="-7" width="13.500" height="13.500" fill="#f6f6f6" stroke="#5d6c8c" stroke-width=".8"/><rect x="-4.300" y="-4" width="8" height="8" fill="none" stroke="#7a8499" stroke-width=".8" stroke-dasharray="1.600 1"/><path d="M-4.300 -4h8M-4.300 -4v8Q2.500 3 3.700 -4" fill="none" stroke="#5a5f6a" stroke-width=".8"/><path d="M1 6.300l4.300-4.300 1.800 1.800-4.300 4.300-2.300.5z" fill="#f0a52a"/><path d="M5.300 2l1.100-1.100 1.800 1.800-1.100 1.100z" fill="#e0473a"/></g><path d="M946.6 988.500v5" stroke="#ababab" stroke-width="1"/><g transform="translate(969.1 978.500)"><rect x="-7" y="-7" width="13.500" height="13.500" fill="#f6f6f6" stroke="#5d6c8c" stroke-width=".8"/><rect x="-4.300" y="-4" width="8" height="8" fill="none" stroke="#7a8499" stroke-width=".8" stroke-dasharray="1.600 1"/><path d="M-4.300 -4h8M-4.300 -4v8Q2.500 3 3.700 -4" fill="none" stroke="#5a5f6a" stroke-width=".8"/><path d="M1 6.300l4.300-4.300 1.800 1.800-4.300 4.300-2.300.5z" fill="#f0a52a"/><path d="M5.300 2l1.100-1.100 1.800 1.800-1.100 1.100z" fill="#e0473a"/></g><path d="M969.1 988.500v5" stroke="#ababab" stroke-width="1"/><g transform="translate(991.5 978.500)"><path d="M-6 -4.300h10.500v11.300h-10.500z" fill="#4fa1e4"/><path d="M-6 -4.300l2.500-2.400h10.500l-2.500 2.400z" fill="#86c4f3"/><path d="M4.500 -4.300l2.500-2.400v10.200l-2.500 3.500z" fill="#2f7fc8"/><path d="M-6 7h10.500l2.500-3.500v1.500l-2.500 3.500h-10.500z" fill="#c5c5c5"/><path d="M7.300 5.500v-10" stroke="#333" stroke-width=".8"/><path d="M6 -4l1.300-2.700 1.300 2.700z" fill="#333"/></g><path d="M991.5 988.500v5" stroke="#ababab" stroke-width="1"/><g transform="translate(1013.9 978.500)"><path d="M-6 -4.300h10.500v11.300h-10.500z" fill="#4fa1e4"/><path d="M-6 -4.300l2.500-2.400h10.500l-2.500 2.400z" fill="#86c4f3"/><path d="M4.500 -4.300l2.500-2.400v10.200l-2.500 3.500z" fill="#2f7fc8"/><path d="M-6 7h10.500l2.500-3.500v1.500l-2.500 3.500h-10.500z" fill="#c5c5c5"/><path d="M7.300 5.500v-10" stroke="#333" stroke-width=".8"/><path d="M6 -4l1.300-2.700 1.300 2.700z" fill="#333"/></g><path d="M1013.9 988.500v5" stroke="#ababab" stroke-width="1"/><g transform="translate(1036.4 978.500)"><path d="M-6 -4.300h10.500v11.300h-10.500z" fill="#4fa1e4"/><path d="M-6 -4.300l2.500-2.400h10.500l-2.500 2.400z" fill="#86c4f3"/><path d="M4.500 -4.300l2.500-2.400v10.200l-2.500 3.500z" fill="#2f7fc8"/><path d="M-6 7h10.500l2.500-3.500v1.500l-2.500 3.500h-10.500z" fill="#c5c5c5"/><path d="M7.300 5.500v-10" stroke="#333" stroke-width=".8"/><path d="M6 -4l1.300-2.700 1.300 2.700z" fill="#333"/></g><path d="M1036.4 988.500v5" stroke="#ababab" stroke-width="1"/><g transform="translate(1058.8 978.500)"><path d="M5 -4.500l3-2.500v10l-3 3.500z" fill="#3b88cf"/><path d="M-7.400 -4.500l3-2.500h12.400l-3 2.500z" fill="#8ccaf5"/><rect x="-7.400" y="-4.500" width="12.400" height="11.500" fill="#e6e6e6" stroke="#858585" stroke-width="1"/><rect x="-4.600" y="-1.800" width="6.800" height="6.300" fill="#fdfdfd" stroke="#9c9c9c" stroke-width=".7"/></g><path d="M1058.8 988.500v5" stroke="#ababab" stroke-width="1"/><g transform="translate(1081.2 978.500)"><path d="M-6 -4.300h10.500v11.300h-10.500z" fill="#4fa1e4"/><path d="M-6 -4.300l2.500-2.400h10.500l-2.500 2.400z" fill="#86c4f3"/><path d="M4.500 -4.300l2.500-2.400v10.200l-2.500 3.500z" fill="#2f7fc8"/><path d="M-6 7h10.500l2.500-3.500v1.500l-2.500 3.500h-10.500z" fill="#c5c5c5"/><path d="M7.300 5.500v-10" stroke="#333" stroke-width=".8"/><path d="M6 -4l1.300-2.700 1.300 2.700z" fill="#333"/></g><path d="M1081.2 988.500v5" stroke="#ababab" stroke-width="1"/><g transform="translate(1103.7 978.500)"><path d="M-6 -4.300h10.500v11.300h-10.500z" fill="#4fa1e4"/><path d="M-6 -4.300l2.500-2.400h10.500l-2.500 2.400z" fill="#86c4f3"/><path d="M4.500 -4.300l2.500-2.400v10.200l-2.500 3.500z" fill="#2f7fc8"/><path d="M-6 7h10.500l2.500-3.500v1.500l-2.500 3.500h-10.500z" fill="#c5c5c5"/><path d="M7.300 5.500v-10" stroke="#333" stroke-width=".8"/><path d="M6 -4l1.300-2.700 1.300 2.700z" fill="#333"/></g><path d="M1103.7 988.500v5" stroke="#ababab" stroke-width="1"/><g transform="translate(1126.1 978.500)"><path d="M-7.500 -3l3-4.500h4Q8 -6.500 8 2v2l-2.500 3.500h-13z" fill="#d2d2d2" stroke="#959595" stroke-width=".8"/><path d="M-1.500 -5.800l2-1.700Q8 -6.500 8 2l-3 1.800Q4.500 -3.800 -1.500 -5.800z" fill="#54a4e6"/></g><path d="M1126.1 988.500v5" stroke="#ababab" stroke-width="1"/><g transform="translate(1148.5 978.500)"><path d="M-7.500 -3l3-4.500h4Q8 -6.500 8 2v2l-2.500 3.500h-13z" fill="#d2d2d2" stroke="#959595" stroke-width=".8"/><path d="M-1.500 -5.800l2-1.700Q8 -6.500 8 2l-3 1.800Q4.500 -3.800 -1.500 -5.800z" fill="#54a4e6"/></g><path d="M1148.5 988.500v5" stroke="#ababab" stroke-width="1"/><g transform="translate(1171.0 978.500)"><path d="M-7.500 -3l3-4.500h4Q8 -6.500 8 2v2l-2.500 3.500h-13z" fill="#d2d2d2" stroke="#959595" stroke-width=".8"/><path d="M-1.500 -5.800l2-1.700Q8 -6.500 8 2l-3 1.800Q4.500 -3.800 -1.500 -5.800z" fill="#54a4e6"/></g><path d="M1171.0 988.500v5" stroke="#ababab" stroke-width="1"/><g transform="translate(1193.4 978.500)"><path d="M-7.500 -3l3-4.500h4Q8 -6.500 8 2v2l-2.500 3.500h-13z" fill="#d2d2d2" stroke="#959595" stroke-width=".8"/><path d="M-1.500 -5.800l2-1.700Q8 -6.500 8 2l-3 1.800Q4.500 -3.800 -1.500 -5.800z" fill="#54a4e6"/></g><path d="M1193.4 988.500v5" stroke="#ababab" stroke-width="1"/><g transform="translate(1215.8 978.500)"><path d="M-7.500 -3l3-4.500h4Q8 -6.500 8 2v2l-2.500 3.500h-13z" fill="#d2d2d2" stroke="#959595" stroke-width=".8"/><path d="M-1.500 -5.800l2-1.700Q8 -6.500 8 2l-3 1.800Q4.500 -3.800 -1.500 -5.800z" fill="#54a4e6"/></g><path d="M1215.8 988.500v5" stroke="#ababab" stroke-width="1"/><g fill="#555"><rect x="5.500" y="977" width="1.800" height="11.500"/><path d="M16 977v11.500l-8.500-5.750z"/><path d="M37.500 978v10l-8.500-5z"/><rect x="39" y="980" width="1.800" height="6"/><path d="M52 975.500v14.500l11.500-7.250z"/><path d="M77 978v10l8.500-5z"/><rect x="73.500" y="980" width="1.800" height="6"/><path d="M98 977v11.500l8.500-5.750z"/><rect x="106.500" y="977" width="1.800" height="11.500"/></g><g transform="translate(1259 982.800)" fill="#5a5a5a"><circle r="5"/><rect x="-1.600" y="-7.200" width="3.200" height="14.400"/><rect x="-1.600" y="-7.200" width="3.200" height="14.400" transform="rotate(45)"/><rect x="-1.600" y="-7.200" width="3.200" height="14.400" transform="rotate(90)"/><rect x="-1.600" y="-7.200" width="3.200" height="14.400" transform="rotate(135)"/><circle r="2.300" fill="#f3f3f3"/></g></svg>
<!--/TIMELINE-->
</body>
</html>
